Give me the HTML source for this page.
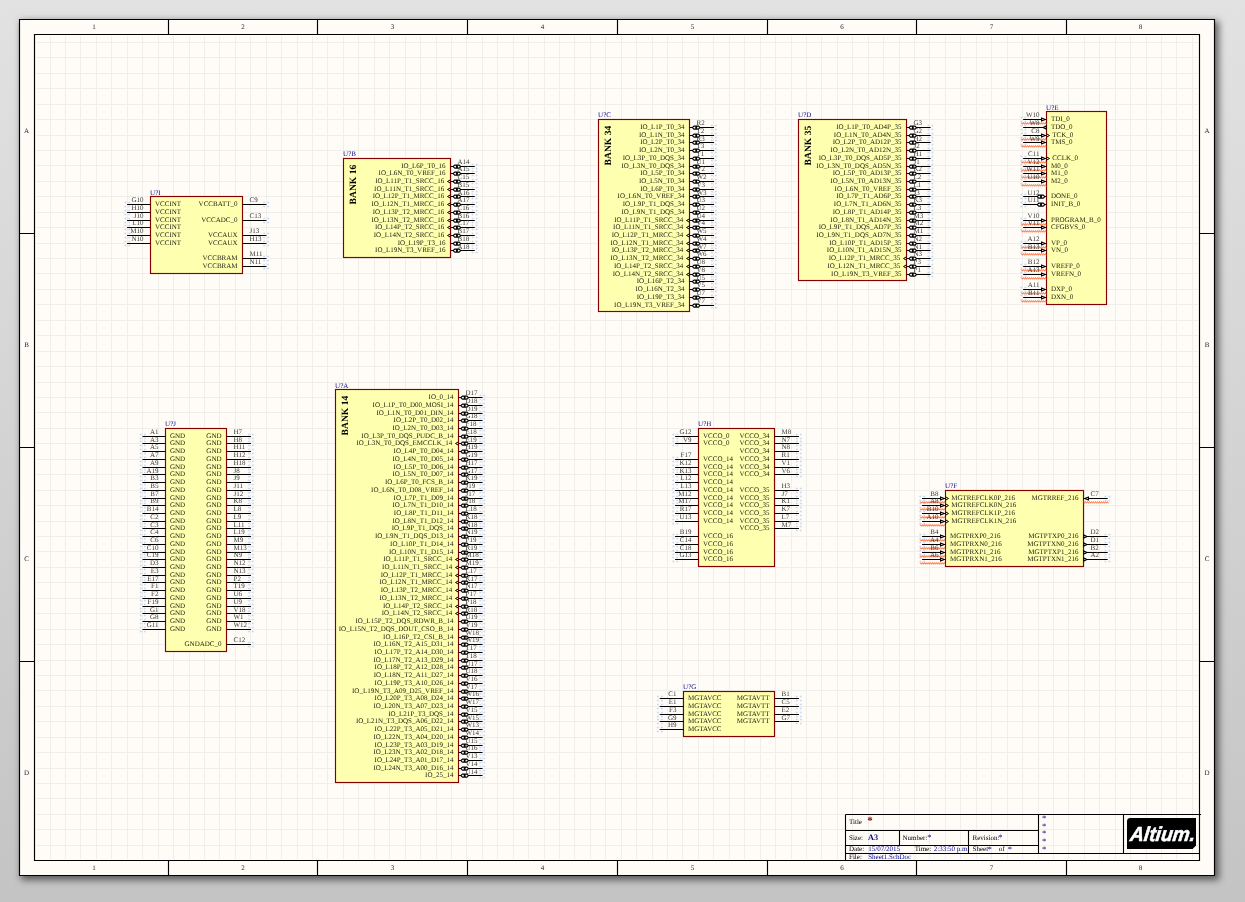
<!DOCTYPE html>
<html lang="en">
<head>
<meta charset="utf-8">
<title>Sheet1.SchDoc</title>
<style>
html,body{margin:0;padding:0;}
body{width:1245px;height:902px;overflow:hidden;position:relative;
background:linear-gradient(to bottom,#e2e2e2 0%,#c4c4c4 100%);}
#shadow{position:absolute;left:18.8px;top:18.8px;width:1196.4px;height:857.1px;background:#fffcf8;
box-shadow:3px 3px 7px 1px rgba(0,0,0,0.55);}
svg{position:absolute;left:0;top:0;display:block;will-change:transform;}
</style>
</head>
<body>
<div id="shadow"></div>
<svg width="1245" height="902" viewBox="0 0 1245 902" font-family="'Liberation Serif', 'Times New Roman', serif" font-size="7" fill="#000" text-rendering="geometricPrecision">
<rect x="19.5" y="19.45" width="1195" height="856.05" fill="#fffcf8"/>
<path d="M50.5 36.25V858.95M65.5 36.25V858.95M80.5 36.25V858.95M96.5 36.25V858.95M111.5 36.25V858.95M127.5 36.25V858.95M142.5 36.25V858.95M158.5 36.25V858.95M173.5 36.25V858.95M189.5 36.25V858.95M204.5 36.25V858.95M219.5 36.25V858.95M235.5 36.25V858.95M250.5 36.25V858.95M266.5 36.25V858.95M281.5 36.25V858.95M297.5 36.25V858.95M312.5 36.25V858.95M327.5 36.25V858.95M343.5 36.25V858.95M358.5 36.25V858.95M374.5 36.25V858.95M389.5 36.25V858.95M405.5 36.25V858.95M420.5 36.25V858.95M436.5 36.25V858.95M451.5 36.25V858.95M466.5 36.25V858.95M482.5 36.25V858.95M497.5 36.25V858.95M513.5 36.25V858.95M528.5 36.25V858.95M544.5 36.25V858.95M559.5 36.25V858.95M574.5 36.25V858.95M590.5 36.25V858.95M605.5 36.25V858.95M621.5 36.25V858.95M636.5 36.25V858.95M652.5 36.25V858.95M667.5 36.25V858.95M682.5 36.25V858.95M698.5 36.25V858.95M713.5 36.25V858.95M729.5 36.25V858.95M744.5 36.25V858.95M760.5 36.25V858.95M775.5 36.25V858.95M791.5 36.25V858.95M806.5 36.25V858.95M821.5 36.25V858.95M837.5 36.25V858.95M852.5 36.25V858.95M868.5 36.25V858.95M883.5 36.25V858.95M899.5 36.25V858.95M914.5 36.25V858.95M929.5 36.25V858.95M945.5 36.25V858.95M960.5 36.25V858.95M976.5 36.25V858.95M991.5 36.25V858.95M1007.5 36.25V858.95M1022.5 36.25V858.95M1038.5 36.25V858.95M1053.5 36.25V858.95M1068.5 36.25V858.95M1084.5 36.25V858.95M1099.5 36.25V858.95M1115.5 36.25V858.95M1130.5 36.25V858.95M1146.5 36.25V858.95M1161.5 36.25V858.95M1176.5 36.25V858.95M1192.5 36.25V858.95M36.3 845.5H1198M36.3 829.5H1198M36.3 814.5H1198M36.3 798.5H1198M36.3 783.5H1198M36.3 768.5H1198M36.3 752.5H1198M36.3 737.5H1198M36.3 721.5H1198M36.3 706.5H1198M36.3 690.5H1198M36.3 675.5H1198M36.3 660.5H1198M36.3 644.5H1198M36.3 629.5H1198M36.3 613.5H1198M36.3 598.5H1198M36.3 582.5H1198M36.3 567.5H1198M36.3 551.5H1198M36.3 536.5H1198M36.3 521.5H1198M36.3 505.5H1198M36.3 490.5H1198M36.3 474.5H1198M36.3 459.5H1198M36.3 443.5H1198M36.3 428.5H1198M36.3 412.5H1198M36.3 397.5H1198M36.3 382.5H1198M36.3 366.5H1198M36.3 351.5H1198M36.3 335.5H1198M36.3 320.5H1198M36.3 304.5H1198M36.3 289.5H1198M36.3 273.5H1198M36.3 258.5H1198M36.3 243.5H1198M36.3 227.5H1198M36.3 212.5H1198M36.3 196.5H1198M36.3 181.5H1198M36.3 165.5H1198M36.3 150.5H1198M36.3 135.5H1198M36.3 119.5H1198M36.3 104.5H1198M36.3 88.5H1198M36.3 73.5H1198M36.3 57.5H1198M36.3 42.5H1198" stroke="#eeeeea" stroke-width="1" fill="none"/>
<path d="M19.5 19.45H1214.5V875.5H19.5ZM34.5 34.45H1199.5V860.45H34.5ZM168.5 19.45V34.45M168.5 860.45V875.5M317.5 19.45V34.45M317.5 860.45V875.5M467.5 19.45V34.45M467.5 860.45V875.5M617.5 19.45V34.45M617.5 860.45V875.5M767.5 19.45V34.45M767.5 860.45V875.5M916.5 19.45V34.45M916.5 860.45V875.5M1066.5 19.45V34.45M1066.5 860.45V875.5M19.5 233.5H34.5M1199.5 233.5H1214.5M19.5 447.5H34.5M1199.5 447.5H1214.5M19.5 661.5H34.5M1199.5 661.5H1214.5" stroke="#000" stroke-width="1.15" fill="none"/>
<g text-anchor="middle" fill="#222">
<text x="94" y="29.2">1</text>
<text x="94" y="870.2">1</text>
<text x="243" y="29.2">2</text>
<text x="243" y="870.2">2</text>
<text x="392.5" y="29.2">3</text>
<text x="392.5" y="870.2">3</text>
<text x="542.5" y="29.2">4</text>
<text x="542.5" y="870.2">4</text>
<text x="692.5" y="29.2">5</text>
<text x="692.5" y="870.2">5</text>
<text x="842" y="29.2">6</text>
<text x="842" y="870.2">6</text>
<text x="991.5" y="29.2">7</text>
<text x="991.5" y="870.2">7</text>
<text x="1140.5" y="29.2">8</text>
<text x="1140.5" y="870.2">8</text>
<text x="26.6" y="132.7">A</text>
<text x="1207" y="132.7">A</text>
<text x="26.6" y="346.7">B</text>
<text x="1207" y="346.7">B</text>
<text x="26.6" y="560.7">C</text>
<text x="1207" y="560.7">C</text>
<text x="26.6" y="775.2">D</text>
<text x="1207" y="775.2">D</text>
</g>
<path d="M845.5 814.5H1201M845.5 814.5V860.45M845.5 830.5H1038.5M845.5 845.5H1038.5M845.5 853.5H1199.5M899.5 830.5V845.5M968.5 830.5V853.5M1038.5 814.5V853.5M1123.5 814.5V853.5" stroke="#000" stroke-width="1.1" fill="none"/>
<g>
<text x="849" y="823.6">Title</text>
<text x="867.2" y="823.9" fill="#8b0000" font-weight="bold" font-size="11">*</text>
<text x="849" y="839.6">Size:</text>
<text x="868" y="839.6" fill="#0a0a8c" font-weight="bold" font-size="8.2">A3</text>
<text x="902.5" y="839.6">Number:</text>
<text x="927.3" y="840.1" fill="#0a0a8c" font-size="8.6">*</text>
<text x="972.6" y="839.6">Revision:</text>
<text x="998.3" y="840.1" fill="#0a0a8c" font-size="8.6">*</text>
<text x="849" y="851.2">Date:</text>
<text x="868.2" y="851.2" fill="#0a0a8c">15/07/2015</text>
<text x="914.7" y="851.2">Time:</text>
<text x="933.7" y="851.2" fill="#0a0a8c">2:33:50 p.m</text>
<text x="972.6" y="851.2">Sheet</text>
<text x="987.6" y="851.9" fill="#0a0a8c" font-size="8.6">*</text>
<text x="998.7" y="851.2">of</text>
<text x="1007.8" y="851.9" fill="#0a0a8c" font-size="8.6">*</text>
<text x="849" y="858.6">File:</text>
<text x="868.2" y="858.6" fill="#0a0a8c">Sheet1.SchDoc</text>
<text x="1042" y="821.1" fill="#0a0a8c" font-size="8.6">*</text>
<text x="1042" y="828.7" fill="#0a0a8c" font-size="8.6">*</text>
<text x="1042" y="836.4" fill="#0a0a8c" font-size="8.6">*</text>
<text x="1042" y="844.2" fill="#0a0a8c" font-size="8.6">*</text>
<text x="1042" y="852" fill="#0a0a8c" font-size="8.6">*</text>
</g>
<path d="M1130.4 818H1196V845.4L1192.6 848.9H1127V821.4Q1127 818 1130.4 818Z" fill="#000"/>
<text transform="translate(1129.5 840.7) skewX(-7)" font-family="'Liberation Sans', Arial, sans-serif" font-weight="bold" font-style="italic" font-size="20.2" fill="#fff" stroke="#fff" stroke-width="0.55" textLength="65" lengthAdjust="spacingAndGlyphs">Altium.</text>
<g fill="#c9d8f1"><rect x="124.39" y="201.7" width="1.8" height="1.6"/><rect x="124.39" y="205.7" width="1.8" height="1.6"/><rect x="128.39" y="201.7" width="1.8" height="1.6"/><rect x="128.39" y="205.7" width="1.8" height="1.6"/><rect x="124.39" y="209.7" width="1.8" height="1.6"/><rect x="124.39" y="213.7" width="1.8" height="1.6"/><rect x="128.39" y="209.7" width="1.8" height="1.6"/><rect x="128.39" y="213.7" width="1.8" height="1.6"/><rect x="124.39" y="217.7" width="1.8" height="1.6"/><rect x="124.39" y="221.7" width="1.8" height="1.6"/><rect x="128.39" y="217.7" width="1.8" height="1.6"/><rect x="128.39" y="221.7" width="1.8" height="1.6"/><rect x="124.39" y="224.7" width="1.8" height="1.6"/><rect x="124.39" y="228.7" width="1.8" height="1.6"/><rect x="128.39" y="224.7" width="1.8" height="1.6"/><rect x="128.39" y="228.7" width="1.8" height="1.6"/><rect x="124.39" y="232.7" width="1.8" height="1.6"/><rect x="124.39" y="236.7" width="1.8" height="1.6"/><rect x="128.39" y="232.7" width="1.8" height="1.6"/><rect x="128.39" y="236.7" width="1.8" height="1.6"/><rect x="124.39" y="240.7" width="1.8" height="1.6"/><rect x="124.39" y="244.7" width="1.8" height="1.6"/><rect x="128.39" y="240.7" width="1.8" height="1.6"/><rect x="128.39" y="244.7" width="1.8" height="1.6"/><rect x="263.32" y="201.7" width="1.8" height="1.6"/><rect x="263.32" y="205.7" width="1.8" height="1.6"/><rect x="267.32" y="201.7" width="1.8" height="1.6"/><rect x="267.32" y="205.7" width="1.8" height="1.6"/><rect x="263.32" y="217.7" width="1.8" height="1.6"/><rect x="263.32" y="221.7" width="1.8" height="1.6"/><rect x="267.32" y="217.7" width="1.8" height="1.6"/><rect x="267.32" y="221.7" width="1.8" height="1.6"/><rect x="263.32" y="232.7" width="1.8" height="1.6"/><rect x="263.32" y="236.7" width="1.8" height="1.6"/><rect x="267.32" y="232.7" width="1.8" height="1.6"/><rect x="267.32" y="236.7" width="1.8" height="1.6"/><rect x="263.32" y="240.7" width="1.8" height="1.6"/><rect x="263.32" y="244.7" width="1.8" height="1.6"/><rect x="267.32" y="240.7" width="1.8" height="1.6"/><rect x="267.32" y="244.7" width="1.8" height="1.6"/><rect x="263.32" y="255.7" width="1.8" height="1.6"/><rect x="263.32" y="259.7" width="1.8" height="1.6"/><rect x="267.32" y="255.7" width="1.8" height="1.6"/><rect x="267.32" y="259.7" width="1.8" height="1.6"/><rect x="263.32" y="263.7" width="1.8" height="1.6"/><rect x="263.32" y="267.7" width="1.8" height="1.6"/><rect x="267.32" y="263.7" width="1.8" height="1.6"/><rect x="267.32" y="267.7" width="1.8" height="1.6"/><rect x="471.7" y="163.7" width="1.8" height="1.6"/><rect x="471.7" y="167.7" width="1.8" height="1.6"/><rect x="475.7" y="163.7" width="1.8" height="1.6"/><rect x="475.7" y="167.7" width="1.8" height="1.6"/><rect x="471.7" y="170.7" width="1.8" height="1.6"/><rect x="471.7" y="174.7" width="1.8" height="1.6"/><rect x="475.7" y="170.7" width="1.8" height="1.6"/><rect x="475.7" y="174.7" width="1.8" height="1.6"/><rect x="471.7" y="178.7" width="1.8" height="1.6"/><rect x="471.7" y="182.7" width="1.8" height="1.6"/><rect x="475.7" y="178.7" width="1.8" height="1.6"/><rect x="475.7" y="182.7" width="1.8" height="1.6"/><rect x="471.7" y="186.7" width="1.8" height="1.6"/><rect x="471.7" y="190.7" width="1.8" height="1.6"/><rect x="475.7" y="186.7" width="1.8" height="1.6"/><rect x="475.7" y="190.7" width="1.8" height="1.6"/><rect x="471.7" y="193.7" width="1.8" height="1.6"/><rect x="471.7" y="197.7" width="1.8" height="1.6"/><rect x="475.7" y="193.7" width="1.8" height="1.6"/><rect x="475.7" y="197.7" width="1.8" height="1.6"/><rect x="471.7" y="201.7" width="1.8" height="1.6"/><rect x="471.7" y="205.7" width="1.8" height="1.6"/><rect x="475.7" y="201.7" width="1.8" height="1.6"/><rect x="475.7" y="205.7" width="1.8" height="1.6"/><rect x="471.7" y="209.7" width="1.8" height="1.6"/><rect x="471.7" y="213.7" width="1.8" height="1.6"/><rect x="475.7" y="209.7" width="1.8" height="1.6"/><rect x="475.7" y="213.7" width="1.8" height="1.6"/><rect x="471.7" y="217.7" width="1.8" height="1.6"/><rect x="471.7" y="221.7" width="1.8" height="1.6"/><rect x="475.7" y="217.7" width="1.8" height="1.6"/><rect x="475.7" y="221.7" width="1.8" height="1.6"/><rect x="471.7" y="224.7" width="1.8" height="1.6"/><rect x="471.7" y="228.7" width="1.8" height="1.6"/><rect x="475.7" y="224.7" width="1.8" height="1.6"/><rect x="475.7" y="228.7" width="1.8" height="1.6"/><rect x="471.7" y="232.7" width="1.8" height="1.6"/><rect x="471.7" y="236.7" width="1.8" height="1.6"/><rect x="475.7" y="232.7" width="1.8" height="1.6"/><rect x="475.7" y="236.7" width="1.8" height="1.6"/><rect x="471.7" y="240.7" width="1.8" height="1.6"/><rect x="471.7" y="244.7" width="1.8" height="1.6"/><rect x="475.7" y="240.7" width="1.8" height="1.6"/><rect x="475.7" y="244.7" width="1.8" height="1.6"/><rect x="471.7" y="247.7" width="1.8" height="1.6"/><rect x="471.7" y="251.7" width="1.8" height="1.6"/><rect x="475.7" y="247.7" width="1.8" height="1.6"/><rect x="475.7" y="251.7" width="1.8" height="1.6"/><rect x="710.96" y="124.7" width="1.8" height="1.6"/><rect x="710.96" y="128.7" width="1.8" height="1.6"/><rect x="714.96" y="124.7" width="1.8" height="1.6"/><rect x="714.96" y="128.7" width="1.8" height="1.6"/><rect x="710.96" y="132.7" width="1.8" height="1.6"/><rect x="710.96" y="136.7" width="1.8" height="1.6"/><rect x="714.96" y="132.7" width="1.8" height="1.6"/><rect x="714.96" y="136.7" width="1.8" height="1.6"/><rect x="710.96" y="139.7" width="1.8" height="1.6"/><rect x="710.96" y="143.7" width="1.8" height="1.6"/><rect x="714.96" y="139.7" width="1.8" height="1.6"/><rect x="714.96" y="143.7" width="1.8" height="1.6"/><rect x="710.96" y="147.7" width="1.8" height="1.6"/><rect x="710.96" y="151.7" width="1.8" height="1.6"/><rect x="714.96" y="147.7" width="1.8" height="1.6"/><rect x="714.96" y="151.7" width="1.8" height="1.6"/><rect x="710.96" y="155.7" width="1.8" height="1.6"/><rect x="710.96" y="159.7" width="1.8" height="1.6"/><rect x="714.96" y="155.7" width="1.8" height="1.6"/><rect x="714.96" y="159.7" width="1.8" height="1.6"/><rect x="710.96" y="163.7" width="1.8" height="1.6"/><rect x="710.96" y="167.7" width="1.8" height="1.6"/><rect x="714.96" y="163.7" width="1.8" height="1.6"/><rect x="714.96" y="167.7" width="1.8" height="1.6"/><rect x="710.96" y="170.7" width="1.8" height="1.6"/><rect x="710.96" y="174.7" width="1.8" height="1.6"/><rect x="714.96" y="170.7" width="1.8" height="1.6"/><rect x="714.96" y="174.7" width="1.8" height="1.6"/><rect x="710.96" y="178.7" width="1.8" height="1.6"/><rect x="710.96" y="182.7" width="1.8" height="1.6"/><rect x="714.96" y="178.7" width="1.8" height="1.6"/><rect x="714.96" y="182.7" width="1.8" height="1.6"/><rect x="710.96" y="186.7" width="1.8" height="1.6"/><rect x="710.96" y="190.7" width="1.8" height="1.6"/><rect x="714.96" y="186.7" width="1.8" height="1.6"/><rect x="714.96" y="190.7" width="1.8" height="1.6"/><rect x="710.96" y="193.7" width="1.8" height="1.6"/><rect x="710.96" y="197.7" width="1.8" height="1.6"/><rect x="714.96" y="193.7" width="1.8" height="1.6"/><rect x="714.96" y="197.7" width="1.8" height="1.6"/><rect x="710.96" y="201.7" width="1.8" height="1.6"/><rect x="710.96" y="205.7" width="1.8" height="1.6"/><rect x="714.96" y="201.7" width="1.8" height="1.6"/><rect x="714.96" y="205.7" width="1.8" height="1.6"/><rect x="710.96" y="209.7" width="1.8" height="1.6"/><rect x="710.96" y="213.7" width="1.8" height="1.6"/><rect x="714.96" y="209.7" width="1.8" height="1.6"/><rect x="714.96" y="213.7" width="1.8" height="1.6"/><rect x="710.96" y="217.7" width="1.8" height="1.6"/><rect x="710.96" y="221.7" width="1.8" height="1.6"/><rect x="714.96" y="217.7" width="1.8" height="1.6"/><rect x="714.96" y="221.7" width="1.8" height="1.6"/><rect x="710.96" y="224.7" width="1.8" height="1.6"/><rect x="710.96" y="228.7" width="1.8" height="1.6"/><rect x="714.96" y="224.7" width="1.8" height="1.6"/><rect x="714.96" y="228.7" width="1.8" height="1.6"/><rect x="710.96" y="232.7" width="1.8" height="1.6"/><rect x="710.96" y="236.7" width="1.8" height="1.6"/><rect x="714.96" y="232.7" width="1.8" height="1.6"/><rect x="714.96" y="236.7" width="1.8" height="1.6"/><rect x="710.96" y="240.7" width="1.8" height="1.6"/><rect x="710.96" y="244.7" width="1.8" height="1.6"/><rect x="714.96" y="240.7" width="1.8" height="1.6"/><rect x="714.96" y="244.7" width="1.8" height="1.6"/><rect x="710.96" y="247.7" width="1.8" height="1.6"/><rect x="710.96" y="251.7" width="1.8" height="1.6"/><rect x="714.96" y="247.7" width="1.8" height="1.6"/><rect x="714.96" y="251.7" width="1.8" height="1.6"/><rect x="710.96" y="255.7" width="1.8" height="1.6"/><rect x="710.96" y="259.7" width="1.8" height="1.6"/><rect x="714.96" y="255.7" width="1.8" height="1.6"/><rect x="714.96" y="259.7" width="1.8" height="1.6"/><rect x="710.96" y="263.7" width="1.8" height="1.6"/><rect x="710.96" y="267.7" width="1.8" height="1.6"/><rect x="714.96" y="263.7" width="1.8" height="1.6"/><rect x="714.96" y="267.7" width="1.8" height="1.6"/><rect x="710.96" y="271.7" width="1.8" height="1.6"/><rect x="710.96" y="275.7" width="1.8" height="1.6"/><rect x="714.96" y="271.7" width="1.8" height="1.6"/><rect x="714.96" y="275.7" width="1.8" height="1.6"/><rect x="710.96" y="278.7" width="1.8" height="1.6"/><rect x="710.96" y="282.7" width="1.8" height="1.6"/><rect x="714.96" y="278.7" width="1.8" height="1.6"/><rect x="714.96" y="282.7" width="1.8" height="1.6"/><rect x="710.96" y="286.7" width="1.8" height="1.6"/><rect x="710.96" y="290.7" width="1.8" height="1.6"/><rect x="714.96" y="286.7" width="1.8" height="1.6"/><rect x="714.96" y="290.7" width="1.8" height="1.6"/><rect x="710.96" y="294.7" width="1.8" height="1.6"/><rect x="710.96" y="298.7" width="1.8" height="1.6"/><rect x="714.96" y="294.7" width="1.8" height="1.6"/><rect x="714.96" y="298.7" width="1.8" height="1.6"/><rect x="710.96" y="302.7" width="1.8" height="1.6"/><rect x="710.96" y="306.7" width="1.8" height="1.6"/><rect x="714.96" y="302.7" width="1.8" height="1.6"/><rect x="714.96" y="306.7" width="1.8" height="1.6"/><rect x="927.53" y="124.7" width="1.8" height="1.6"/><rect x="927.53" y="128.7" width="1.8" height="1.6"/><rect x="931.53" y="124.7" width="1.8" height="1.6"/><rect x="931.53" y="128.7" width="1.8" height="1.6"/><rect x="927.53" y="132.7" width="1.8" height="1.6"/><rect x="927.53" y="136.7" width="1.8" height="1.6"/><rect x="931.53" y="132.7" width="1.8" height="1.6"/><rect x="931.53" y="136.7" width="1.8" height="1.6"/><rect x="927.53" y="139.7" width="1.8" height="1.6"/><rect x="927.53" y="143.7" width="1.8" height="1.6"/><rect x="931.53" y="139.7" width="1.8" height="1.6"/><rect x="931.53" y="143.7" width="1.8" height="1.6"/><rect x="927.53" y="147.7" width="1.8" height="1.6"/><rect x="927.53" y="151.7" width="1.8" height="1.6"/><rect x="931.53" y="147.7" width="1.8" height="1.6"/><rect x="931.53" y="151.7" width="1.8" height="1.6"/><rect x="927.53" y="155.7" width="1.8" height="1.6"/><rect x="927.53" y="159.7" width="1.8" height="1.6"/><rect x="931.53" y="155.7" width="1.8" height="1.6"/><rect x="931.53" y="159.7" width="1.8" height="1.6"/><rect x="927.53" y="163.7" width="1.8" height="1.6"/><rect x="927.53" y="167.7" width="1.8" height="1.6"/><rect x="931.53" y="163.7" width="1.8" height="1.6"/><rect x="931.53" y="167.7" width="1.8" height="1.6"/><rect x="927.53" y="170.7" width="1.8" height="1.6"/><rect x="927.53" y="174.7" width="1.8" height="1.6"/><rect x="931.53" y="170.7" width="1.8" height="1.6"/><rect x="931.53" y="174.7" width="1.8" height="1.6"/><rect x="927.53" y="178.7" width="1.8" height="1.6"/><rect x="927.53" y="182.7" width="1.8" height="1.6"/><rect x="931.53" y="178.7" width="1.8" height="1.6"/><rect x="931.53" y="182.7" width="1.8" height="1.6"/><rect x="927.53" y="186.7" width="1.8" height="1.6"/><rect x="927.53" y="190.7" width="1.8" height="1.6"/><rect x="931.53" y="186.7" width="1.8" height="1.6"/><rect x="931.53" y="190.7" width="1.8" height="1.6"/><rect x="927.53" y="193.7" width="1.8" height="1.6"/><rect x="927.53" y="197.7" width="1.8" height="1.6"/><rect x="931.53" y="193.7" width="1.8" height="1.6"/><rect x="931.53" y="197.7" width="1.8" height="1.6"/><rect x="927.53" y="201.7" width="1.8" height="1.6"/><rect x="927.53" y="205.7" width="1.8" height="1.6"/><rect x="931.53" y="201.7" width="1.8" height="1.6"/><rect x="931.53" y="205.7" width="1.8" height="1.6"/><rect x="927.53" y="209.7" width="1.8" height="1.6"/><rect x="927.53" y="213.7" width="1.8" height="1.6"/><rect x="931.53" y="209.7" width="1.8" height="1.6"/><rect x="931.53" y="213.7" width="1.8" height="1.6"/><rect x="927.53" y="217.7" width="1.8" height="1.6"/><rect x="927.53" y="221.7" width="1.8" height="1.6"/><rect x="931.53" y="217.7" width="1.8" height="1.6"/><rect x="931.53" y="221.7" width="1.8" height="1.6"/><rect x="927.53" y="224.7" width="1.8" height="1.6"/><rect x="927.53" y="228.7" width="1.8" height="1.6"/><rect x="931.53" y="224.7" width="1.8" height="1.6"/><rect x="931.53" y="228.7" width="1.8" height="1.6"/><rect x="927.53" y="232.7" width="1.8" height="1.6"/><rect x="927.53" y="236.7" width="1.8" height="1.6"/><rect x="931.53" y="232.7" width="1.8" height="1.6"/><rect x="931.53" y="236.7" width="1.8" height="1.6"/><rect x="927.53" y="240.7" width="1.8" height="1.6"/><rect x="927.53" y="244.7" width="1.8" height="1.6"/><rect x="931.53" y="240.7" width="1.8" height="1.6"/><rect x="931.53" y="244.7" width="1.8" height="1.6"/><rect x="927.53" y="247.7" width="1.8" height="1.6"/><rect x="927.53" y="251.7" width="1.8" height="1.6"/><rect x="931.53" y="247.7" width="1.8" height="1.6"/><rect x="931.53" y="251.7" width="1.8" height="1.6"/><rect x="927.53" y="255.7" width="1.8" height="1.6"/><rect x="927.53" y="259.7" width="1.8" height="1.6"/><rect x="931.53" y="255.7" width="1.8" height="1.6"/><rect x="931.53" y="259.7" width="1.8" height="1.6"/><rect x="927.53" y="263.7" width="1.8" height="1.6"/><rect x="927.53" y="267.7" width="1.8" height="1.6"/><rect x="931.53" y="263.7" width="1.8" height="1.6"/><rect x="931.53" y="267.7" width="1.8" height="1.6"/><rect x="927.53" y="271.7" width="1.8" height="1.6"/><rect x="927.53" y="275.7" width="1.8" height="1.6"/><rect x="931.53" y="271.7" width="1.8" height="1.6"/><rect x="931.53" y="275.7" width="1.8" height="1.6"/><rect x="1020.45" y="116.7" width="1.8" height="1.6"/><rect x="1020.45" y="120.7" width="1.8" height="1.6"/><rect x="1024.45" y="116.7" width="1.8" height="1.6"/><rect x="1024.45" y="120.7" width="1.8" height="1.6"/><rect x="1020.45" y="124.7" width="1.8" height="1.6"/><rect x="1020.45" y="128.7" width="1.8" height="1.6"/><rect x="1024.45" y="124.7" width="1.8" height="1.6"/><rect x="1024.45" y="128.7" width="1.8" height="1.6"/><rect x="1020.45" y="132.7" width="1.8" height="1.6"/><rect x="1020.45" y="136.7" width="1.8" height="1.6"/><rect x="1024.45" y="132.7" width="1.8" height="1.6"/><rect x="1024.45" y="136.7" width="1.8" height="1.6"/><rect x="1020.45" y="139.7" width="1.8" height="1.6"/><rect x="1020.45" y="143.7" width="1.8" height="1.6"/><rect x="1024.45" y="139.7" width="1.8" height="1.6"/><rect x="1024.45" y="143.7" width="1.8" height="1.6"/><rect x="1020.45" y="155.7" width="1.8" height="1.6"/><rect x="1020.45" y="159.7" width="1.8" height="1.6"/><rect x="1024.45" y="155.7" width="1.8" height="1.6"/><rect x="1024.45" y="159.7" width="1.8" height="1.6"/><rect x="1020.45" y="163.7" width="1.8" height="1.6"/><rect x="1020.45" y="167.7" width="1.8" height="1.6"/><rect x="1024.45" y="163.7" width="1.8" height="1.6"/><rect x="1024.45" y="167.7" width="1.8" height="1.6"/><rect x="1020.45" y="170.7" width="1.8" height="1.6"/><rect x="1020.45" y="174.7" width="1.8" height="1.6"/><rect x="1024.45" y="170.7" width="1.8" height="1.6"/><rect x="1024.45" y="174.7" width="1.8" height="1.6"/><rect x="1020.45" y="178.7" width="1.8" height="1.6"/><rect x="1020.45" y="182.7" width="1.8" height="1.6"/><rect x="1024.45" y="178.7" width="1.8" height="1.6"/><rect x="1024.45" y="182.7" width="1.8" height="1.6"/><rect x="1020.45" y="193.7" width="1.8" height="1.6"/><rect x="1020.45" y="197.7" width="1.8" height="1.6"/><rect x="1024.45" y="193.7" width="1.8" height="1.6"/><rect x="1024.45" y="197.7" width="1.8" height="1.6"/><rect x="1020.45" y="201.7" width="1.8" height="1.6"/><rect x="1020.45" y="205.7" width="1.8" height="1.6"/><rect x="1024.45" y="201.7" width="1.8" height="1.6"/><rect x="1024.45" y="205.7" width="1.8" height="1.6"/><rect x="1020.45" y="217.7" width="1.8" height="1.6"/><rect x="1020.45" y="221.7" width="1.8" height="1.6"/><rect x="1024.45" y="217.7" width="1.8" height="1.6"/><rect x="1024.45" y="221.7" width="1.8" height="1.6"/><rect x="1020.45" y="224.7" width="1.8" height="1.6"/><rect x="1020.45" y="228.7" width="1.8" height="1.6"/><rect x="1024.45" y="224.7" width="1.8" height="1.6"/><rect x="1024.45" y="228.7" width="1.8" height="1.6"/><rect x="1020.45" y="240.7" width="1.8" height="1.6"/><rect x="1020.45" y="244.7" width="1.8" height="1.6"/><rect x="1024.45" y="240.7" width="1.8" height="1.6"/><rect x="1024.45" y="244.7" width="1.8" height="1.6"/><rect x="1020.45" y="247.7" width="1.8" height="1.6"/><rect x="1020.45" y="251.7" width="1.8" height="1.6"/><rect x="1024.45" y="247.7" width="1.8" height="1.6"/><rect x="1024.45" y="251.7" width="1.8" height="1.6"/><rect x="1020.45" y="263.7" width="1.8" height="1.6"/><rect x="1020.45" y="267.7" width="1.8" height="1.6"/><rect x="1024.45" y="263.7" width="1.8" height="1.6"/><rect x="1024.45" y="267.7" width="1.8" height="1.6"/><rect x="1020.45" y="271.7" width="1.8" height="1.6"/><rect x="1020.45" y="275.7" width="1.8" height="1.6"/><rect x="1024.45" y="271.7" width="1.8" height="1.6"/><rect x="1024.45" y="275.7" width="1.8" height="1.6"/><rect x="1020.45" y="286.7" width="1.8" height="1.6"/><rect x="1020.45" y="290.7" width="1.8" height="1.6"/><rect x="1024.45" y="286.7" width="1.8" height="1.6"/><rect x="1024.45" y="290.7" width="1.8" height="1.6"/><rect x="1020.45" y="294.7" width="1.8" height="1.6"/><rect x="1020.45" y="298.7" width="1.8" height="1.6"/><rect x="1024.45" y="294.7" width="1.8" height="1.6"/><rect x="1024.45" y="298.7" width="1.8" height="1.6"/><rect x="139.83" y="433.7" width="1.8" height="1.6"/><rect x="139.83" y="437.7" width="1.8" height="1.6"/><rect x="143.83" y="433.7" width="1.8" height="1.6"/><rect x="143.83" y="437.7" width="1.8" height="1.6"/><rect x="139.83" y="440.7" width="1.8" height="1.6"/><rect x="139.83" y="444.7" width="1.8" height="1.6"/><rect x="143.83" y="440.7" width="1.8" height="1.6"/><rect x="143.83" y="444.7" width="1.8" height="1.6"/><rect x="139.83" y="448.7" width="1.8" height="1.6"/><rect x="139.83" y="452.7" width="1.8" height="1.6"/><rect x="143.83" y="448.7" width="1.8" height="1.6"/><rect x="143.83" y="452.7" width="1.8" height="1.6"/><rect x="139.83" y="456.7" width="1.8" height="1.6"/><rect x="139.83" y="460.7" width="1.8" height="1.6"/><rect x="143.83" y="456.7" width="1.8" height="1.6"/><rect x="143.83" y="460.7" width="1.8" height="1.6"/><rect x="139.83" y="464.7" width="1.8" height="1.6"/><rect x="139.83" y="468.7" width="1.8" height="1.6"/><rect x="143.83" y="464.7" width="1.8" height="1.6"/><rect x="143.83" y="468.7" width="1.8" height="1.6"/><rect x="139.83" y="471.7" width="1.8" height="1.6"/><rect x="139.83" y="475.7" width="1.8" height="1.6"/><rect x="143.83" y="471.7" width="1.8" height="1.6"/><rect x="143.83" y="475.7" width="1.8" height="1.6"/><rect x="139.83" y="479.7" width="1.8" height="1.6"/><rect x="139.83" y="483.7" width="1.8" height="1.6"/><rect x="143.83" y="479.7" width="1.8" height="1.6"/><rect x="143.83" y="483.7" width="1.8" height="1.6"/><rect x="139.83" y="487.7" width="1.8" height="1.6"/><rect x="139.83" y="491.7" width="1.8" height="1.6"/><rect x="143.83" y="487.7" width="1.8" height="1.6"/><rect x="143.83" y="491.7" width="1.8" height="1.6"/><rect x="139.83" y="495.7" width="1.8" height="1.6"/><rect x="139.83" y="499.7" width="1.8" height="1.6"/><rect x="143.83" y="495.7" width="1.8" height="1.6"/><rect x="143.83" y="499.7" width="1.8" height="1.6"/><rect x="139.83" y="502.7" width="1.8" height="1.6"/><rect x="139.83" y="506.7" width="1.8" height="1.6"/><rect x="143.83" y="502.7" width="1.8" height="1.6"/><rect x="143.83" y="506.7" width="1.8" height="1.6"/><rect x="139.83" y="510.7" width="1.8" height="1.6"/><rect x="139.83" y="514.7" width="1.8" height="1.6"/><rect x="143.83" y="510.7" width="1.8" height="1.6"/><rect x="143.83" y="514.7" width="1.8" height="1.6"/><rect x="139.83" y="518.7" width="1.8" height="1.6"/><rect x="139.83" y="522.7" width="1.8" height="1.6"/><rect x="143.83" y="518.7" width="1.8" height="1.6"/><rect x="143.83" y="522.7" width="1.8" height="1.6"/><rect x="139.83" y="525.7" width="1.8" height="1.6"/><rect x="139.83" y="529.7" width="1.8" height="1.6"/><rect x="143.83" y="525.7" width="1.8" height="1.6"/><rect x="143.83" y="529.7" width="1.8" height="1.6"/><rect x="139.83" y="533.7" width="1.8" height="1.6"/><rect x="139.83" y="537.7" width="1.8" height="1.6"/><rect x="143.83" y="533.7" width="1.8" height="1.6"/><rect x="143.83" y="537.7" width="1.8" height="1.6"/><rect x="139.83" y="541.7" width="1.8" height="1.6"/><rect x="139.83" y="545.7" width="1.8" height="1.6"/><rect x="143.83" y="541.7" width="1.8" height="1.6"/><rect x="143.83" y="545.7" width="1.8" height="1.6"/><rect x="139.83" y="549.7" width="1.8" height="1.6"/><rect x="139.83" y="553.7" width="1.8" height="1.6"/><rect x="143.83" y="549.7" width="1.8" height="1.6"/><rect x="143.83" y="553.7" width="1.8" height="1.6"/><rect x="139.83" y="556.7" width="1.8" height="1.6"/><rect x="139.83" y="560.7" width="1.8" height="1.6"/><rect x="143.83" y="556.7" width="1.8" height="1.6"/><rect x="143.83" y="560.7" width="1.8" height="1.6"/><rect x="139.83" y="564.7" width="1.8" height="1.6"/><rect x="139.83" y="568.7" width="1.8" height="1.6"/><rect x="143.83" y="564.7" width="1.8" height="1.6"/><rect x="143.83" y="568.7" width="1.8" height="1.6"/><rect x="139.83" y="572.7" width="1.8" height="1.6"/><rect x="139.83" y="576.7" width="1.8" height="1.6"/><rect x="143.83" y="572.7" width="1.8" height="1.6"/><rect x="143.83" y="576.7" width="1.8" height="1.6"/><rect x="139.83" y="579.7" width="1.8" height="1.6"/><rect x="139.83" y="583.7" width="1.8" height="1.6"/><rect x="143.83" y="579.7" width="1.8" height="1.6"/><rect x="143.83" y="583.7" width="1.8" height="1.6"/><rect x="139.83" y="587.7" width="1.8" height="1.6"/><rect x="139.83" y="591.7" width="1.8" height="1.6"/><rect x="143.83" y="587.7" width="1.8" height="1.6"/><rect x="143.83" y="591.7" width="1.8" height="1.6"/><rect x="139.83" y="595.7" width="1.8" height="1.6"/><rect x="139.83" y="599.7" width="1.8" height="1.6"/><rect x="143.83" y="595.7" width="1.8" height="1.6"/><rect x="143.83" y="599.7" width="1.8" height="1.6"/><rect x="139.83" y="603.7" width="1.8" height="1.6"/><rect x="139.83" y="607.7" width="1.8" height="1.6"/><rect x="143.83" y="603.7" width="1.8" height="1.6"/><rect x="143.83" y="607.7" width="1.8" height="1.6"/><rect x="139.83" y="610.7" width="1.8" height="1.6"/><rect x="139.83" y="614.7" width="1.8" height="1.6"/><rect x="143.83" y="610.7" width="1.8" height="1.6"/><rect x="143.83" y="614.7" width="1.8" height="1.6"/><rect x="139.83" y="618.7" width="1.8" height="1.6"/><rect x="139.83" y="622.7" width="1.8" height="1.6"/><rect x="143.83" y="618.7" width="1.8" height="1.6"/><rect x="143.83" y="622.7" width="1.8" height="1.6"/><rect x="139.83" y="626.7" width="1.8" height="1.6"/><rect x="139.83" y="630.7" width="1.8" height="1.6"/><rect x="143.83" y="626.7" width="1.8" height="1.6"/><rect x="143.83" y="630.7" width="1.8" height="1.6"/><rect x="247.88" y="433.7" width="1.8" height="1.6"/><rect x="247.88" y="437.7" width="1.8" height="1.6"/><rect x="251.88" y="433.7" width="1.8" height="1.6"/><rect x="251.88" y="437.7" width="1.8" height="1.6"/><rect x="247.88" y="440.7" width="1.8" height="1.6"/><rect x="247.88" y="444.7" width="1.8" height="1.6"/><rect x="251.88" y="440.7" width="1.8" height="1.6"/><rect x="251.88" y="444.7" width="1.8" height="1.6"/><rect x="247.88" y="448.7" width="1.8" height="1.6"/><rect x="247.88" y="452.7" width="1.8" height="1.6"/><rect x="251.88" y="448.7" width="1.8" height="1.6"/><rect x="251.88" y="452.7" width="1.8" height="1.6"/><rect x="247.88" y="456.7" width="1.8" height="1.6"/><rect x="247.88" y="460.7" width="1.8" height="1.6"/><rect x="251.88" y="456.7" width="1.8" height="1.6"/><rect x="251.88" y="460.7" width="1.8" height="1.6"/><rect x="247.88" y="464.7" width="1.8" height="1.6"/><rect x="247.88" y="468.7" width="1.8" height="1.6"/><rect x="251.88" y="464.7" width="1.8" height="1.6"/><rect x="251.88" y="468.7" width="1.8" height="1.6"/><rect x="247.88" y="471.7" width="1.8" height="1.6"/><rect x="247.88" y="475.7" width="1.8" height="1.6"/><rect x="251.88" y="471.7" width="1.8" height="1.6"/><rect x="251.88" y="475.7" width="1.8" height="1.6"/><rect x="247.88" y="479.7" width="1.8" height="1.6"/><rect x="247.88" y="483.7" width="1.8" height="1.6"/><rect x="251.88" y="479.7" width="1.8" height="1.6"/><rect x="251.88" y="483.7" width="1.8" height="1.6"/><rect x="247.88" y="487.7" width="1.8" height="1.6"/><rect x="247.88" y="491.7" width="1.8" height="1.6"/><rect x="251.88" y="487.7" width="1.8" height="1.6"/><rect x="251.88" y="491.7" width="1.8" height="1.6"/><rect x="247.88" y="495.7" width="1.8" height="1.6"/><rect x="247.88" y="499.7" width="1.8" height="1.6"/><rect x="251.88" y="495.7" width="1.8" height="1.6"/><rect x="251.88" y="499.7" width="1.8" height="1.6"/><rect x="247.88" y="502.7" width="1.8" height="1.6"/><rect x="247.88" y="506.7" width="1.8" height="1.6"/><rect x="251.88" y="502.7" width="1.8" height="1.6"/><rect x="251.88" y="506.7" width="1.8" height="1.6"/><rect x="247.88" y="510.7" width="1.8" height="1.6"/><rect x="247.88" y="514.7" width="1.8" height="1.6"/><rect x="251.88" y="510.7" width="1.8" height="1.6"/><rect x="251.88" y="514.7" width="1.8" height="1.6"/><rect x="247.88" y="518.7" width="1.8" height="1.6"/><rect x="247.88" y="522.7" width="1.8" height="1.6"/><rect x="251.88" y="518.7" width="1.8" height="1.6"/><rect x="251.88" y="522.7" width="1.8" height="1.6"/><rect x="247.88" y="525.7" width="1.8" height="1.6"/><rect x="247.88" y="529.7" width="1.8" height="1.6"/><rect x="251.88" y="525.7" width="1.8" height="1.6"/><rect x="251.88" y="529.7" width="1.8" height="1.6"/><rect x="247.88" y="533.7" width="1.8" height="1.6"/><rect x="247.88" y="537.7" width="1.8" height="1.6"/><rect x="251.88" y="533.7" width="1.8" height="1.6"/><rect x="251.88" y="537.7" width="1.8" height="1.6"/><rect x="247.88" y="541.7" width="1.8" height="1.6"/><rect x="247.88" y="545.7" width="1.8" height="1.6"/><rect x="251.88" y="541.7" width="1.8" height="1.6"/><rect x="251.88" y="545.7" width="1.8" height="1.6"/><rect x="247.88" y="549.7" width="1.8" height="1.6"/><rect x="247.88" y="553.7" width="1.8" height="1.6"/><rect x="251.88" y="549.7" width="1.8" height="1.6"/><rect x="251.88" y="553.7" width="1.8" height="1.6"/><rect x="247.88" y="556.7" width="1.8" height="1.6"/><rect x="247.88" y="560.7" width="1.8" height="1.6"/><rect x="251.88" y="556.7" width="1.8" height="1.6"/><rect x="251.88" y="560.7" width="1.8" height="1.6"/><rect x="247.88" y="564.7" width="1.8" height="1.6"/><rect x="247.88" y="568.7" width="1.8" height="1.6"/><rect x="251.88" y="564.7" width="1.8" height="1.6"/><rect x="251.88" y="568.7" width="1.8" height="1.6"/><rect x="247.88" y="572.7" width="1.8" height="1.6"/><rect x="247.88" y="576.7" width="1.8" height="1.6"/><rect x="251.88" y="572.7" width="1.8" height="1.6"/><rect x="251.88" y="576.7" width="1.8" height="1.6"/><rect x="247.88" y="579.7" width="1.8" height="1.6"/><rect x="247.88" y="583.7" width="1.8" height="1.6"/><rect x="251.88" y="579.7" width="1.8" height="1.6"/><rect x="251.88" y="583.7" width="1.8" height="1.6"/><rect x="247.88" y="587.7" width="1.8" height="1.6"/><rect x="247.88" y="591.7" width="1.8" height="1.6"/><rect x="251.88" y="587.7" width="1.8" height="1.6"/><rect x="251.88" y="591.7" width="1.8" height="1.6"/><rect x="247.88" y="595.7" width="1.8" height="1.6"/><rect x="247.88" y="599.7" width="1.8" height="1.6"/><rect x="251.88" y="595.7" width="1.8" height="1.6"/><rect x="251.88" y="599.7" width="1.8" height="1.6"/><rect x="247.88" y="603.7" width="1.8" height="1.6"/><rect x="247.88" y="607.7" width="1.8" height="1.6"/><rect x="251.88" y="603.7" width="1.8" height="1.6"/><rect x="251.88" y="607.7" width="1.8" height="1.6"/><rect x="247.88" y="610.7" width="1.8" height="1.6"/><rect x="247.88" y="614.7" width="1.8" height="1.6"/><rect x="251.88" y="610.7" width="1.8" height="1.6"/><rect x="251.88" y="614.7" width="1.8" height="1.6"/><rect x="247.88" y="618.7" width="1.8" height="1.6"/><rect x="247.88" y="622.7" width="1.8" height="1.6"/><rect x="251.88" y="618.7" width="1.8" height="1.6"/><rect x="251.88" y="622.7" width="1.8" height="1.6"/><rect x="247.88" y="626.7" width="1.8" height="1.6"/><rect x="247.88" y="630.7" width="1.8" height="1.6"/><rect x="251.88" y="626.7" width="1.8" height="1.6"/><rect x="251.88" y="630.7" width="1.8" height="1.6"/><rect x="247.88" y="641.7" width="1.8" height="1.6"/><rect x="247.88" y="645.7" width="1.8" height="1.6"/><rect x="251.88" y="641.7" width="1.8" height="1.6"/><rect x="251.88" y="645.7" width="1.8" height="1.6"/><rect x="479.42" y="394.7" width="1.8" height="1.6"/><rect x="479.42" y="398.7" width="1.8" height="1.6"/><rect x="483.42" y="394.7" width="1.8" height="1.6"/><rect x="483.42" y="398.7" width="1.8" height="1.6"/><rect x="479.42" y="402.7" width="1.8" height="1.6"/><rect x="479.42" y="406.7" width="1.8" height="1.6"/><rect x="483.42" y="402.7" width="1.8" height="1.6"/><rect x="483.42" y="406.7" width="1.8" height="1.6"/><rect x="479.42" y="410.7" width="1.8" height="1.6"/><rect x="479.42" y="414.7" width="1.8" height="1.6"/><rect x="483.42" y="410.7" width="1.8" height="1.6"/><rect x="483.42" y="414.7" width="1.8" height="1.6"/><rect x="479.42" y="417.7" width="1.8" height="1.6"/><rect x="479.42" y="421.7" width="1.8" height="1.6"/><rect x="483.42" y="417.7" width="1.8" height="1.6"/><rect x="483.42" y="421.7" width="1.8" height="1.6"/><rect x="479.42" y="425.7" width="1.8" height="1.6"/><rect x="479.42" y="429.7" width="1.8" height="1.6"/><rect x="483.42" y="425.7" width="1.8" height="1.6"/><rect x="483.42" y="429.7" width="1.8" height="1.6"/><rect x="479.42" y="433.7" width="1.8" height="1.6"/><rect x="479.42" y="437.7" width="1.8" height="1.6"/><rect x="483.42" y="433.7" width="1.8" height="1.6"/><rect x="483.42" y="437.7" width="1.8" height="1.6"/><rect x="479.42" y="440.7" width="1.8" height="1.6"/><rect x="479.42" y="444.7" width="1.8" height="1.6"/><rect x="483.42" y="440.7" width="1.8" height="1.6"/><rect x="483.42" y="444.7" width="1.8" height="1.6"/><rect x="479.42" y="448.7" width="1.8" height="1.6"/><rect x="479.42" y="452.7" width="1.8" height="1.6"/><rect x="483.42" y="448.7" width="1.8" height="1.6"/><rect x="483.42" y="452.7" width="1.8" height="1.6"/><rect x="479.42" y="456.7" width="1.8" height="1.6"/><rect x="479.42" y="460.7" width="1.8" height="1.6"/><rect x="483.42" y="456.7" width="1.8" height="1.6"/><rect x="483.42" y="460.7" width="1.8" height="1.6"/><rect x="479.42" y="464.7" width="1.8" height="1.6"/><rect x="479.42" y="468.7" width="1.8" height="1.6"/><rect x="483.42" y="464.7" width="1.8" height="1.6"/><rect x="483.42" y="468.7" width="1.8" height="1.6"/><rect x="479.42" y="471.7" width="1.8" height="1.6"/><rect x="479.42" y="475.7" width="1.8" height="1.6"/><rect x="483.42" y="471.7" width="1.8" height="1.6"/><rect x="483.42" y="475.7" width="1.8" height="1.6"/><rect x="479.42" y="479.7" width="1.8" height="1.6"/><rect x="479.42" y="483.7" width="1.8" height="1.6"/><rect x="483.42" y="479.7" width="1.8" height="1.6"/><rect x="483.42" y="483.7" width="1.8" height="1.6"/><rect x="479.42" y="487.7" width="1.8" height="1.6"/><rect x="479.42" y="491.7" width="1.8" height="1.6"/><rect x="483.42" y="487.7" width="1.8" height="1.6"/><rect x="483.42" y="491.7" width="1.8" height="1.6"/><rect x="479.42" y="495.7" width="1.8" height="1.6"/><rect x="479.42" y="499.7" width="1.8" height="1.6"/><rect x="483.42" y="495.7" width="1.8" height="1.6"/><rect x="483.42" y="499.7" width="1.8" height="1.6"/><rect x="479.42" y="502.7" width="1.8" height="1.6"/><rect x="479.42" y="506.7" width="1.8" height="1.6"/><rect x="483.42" y="502.7" width="1.8" height="1.6"/><rect x="483.42" y="506.7" width="1.8" height="1.6"/><rect x="479.42" y="510.7" width="1.8" height="1.6"/><rect x="479.42" y="514.7" width="1.8" height="1.6"/><rect x="483.42" y="510.7" width="1.8" height="1.6"/><rect x="483.42" y="514.7" width="1.8" height="1.6"/><rect x="479.42" y="518.7" width="1.8" height="1.6"/><rect x="479.42" y="522.7" width="1.8" height="1.6"/><rect x="483.42" y="518.7" width="1.8" height="1.6"/><rect x="483.42" y="522.7" width="1.8" height="1.6"/><rect x="479.42" y="525.7" width="1.8" height="1.6"/><rect x="479.42" y="529.7" width="1.8" height="1.6"/><rect x="483.42" y="525.7" width="1.8" height="1.6"/><rect x="483.42" y="529.7" width="1.8" height="1.6"/><rect x="479.42" y="533.7" width="1.8" height="1.6"/><rect x="479.42" y="537.7" width="1.8" height="1.6"/><rect x="483.42" y="533.7" width="1.8" height="1.6"/><rect x="483.42" y="537.7" width="1.8" height="1.6"/><rect x="479.42" y="541.7" width="1.8" height="1.6"/><rect x="479.42" y="545.7" width="1.8" height="1.6"/><rect x="483.42" y="541.7" width="1.8" height="1.6"/><rect x="483.42" y="545.7" width="1.8" height="1.6"/><rect x="479.42" y="549.7" width="1.8" height="1.6"/><rect x="479.42" y="553.7" width="1.8" height="1.6"/><rect x="483.42" y="549.7" width="1.8" height="1.6"/><rect x="483.42" y="553.7" width="1.8" height="1.6"/><rect x="479.42" y="556.7" width="1.8" height="1.6"/><rect x="479.42" y="560.7" width="1.8" height="1.6"/><rect x="483.42" y="556.7" width="1.8" height="1.6"/><rect x="483.42" y="560.7" width="1.8" height="1.6"/><rect x="479.42" y="564.7" width="1.8" height="1.6"/><rect x="479.42" y="568.7" width="1.8" height="1.6"/><rect x="483.42" y="564.7" width="1.8" height="1.6"/><rect x="483.42" y="568.7" width="1.8" height="1.6"/><rect x="479.42" y="572.7" width="1.8" height="1.6"/><rect x="479.42" y="576.7" width="1.8" height="1.6"/><rect x="483.42" y="572.7" width="1.8" height="1.6"/><rect x="483.42" y="576.7" width="1.8" height="1.6"/><rect x="479.42" y="579.7" width="1.8" height="1.6"/><rect x="479.42" y="583.7" width="1.8" height="1.6"/><rect x="483.42" y="579.7" width="1.8" height="1.6"/><rect x="483.42" y="583.7" width="1.8" height="1.6"/><rect x="479.42" y="587.7" width="1.8" height="1.6"/><rect x="479.42" y="591.7" width="1.8" height="1.6"/><rect x="483.42" y="587.7" width="1.8" height="1.6"/><rect x="483.42" y="591.7" width="1.8" height="1.6"/><rect x="479.42" y="595.7" width="1.8" height="1.6"/><rect x="479.42" y="599.7" width="1.8" height="1.6"/><rect x="483.42" y="595.7" width="1.8" height="1.6"/><rect x="483.42" y="599.7" width="1.8" height="1.6"/><rect x="479.42" y="603.7" width="1.8" height="1.6"/><rect x="479.42" y="607.7" width="1.8" height="1.6"/><rect x="483.42" y="603.7" width="1.8" height="1.6"/><rect x="483.42" y="607.7" width="1.8" height="1.6"/><rect x="479.42" y="610.7" width="1.8" height="1.6"/><rect x="479.42" y="614.7" width="1.8" height="1.6"/><rect x="483.42" y="610.7" width="1.8" height="1.6"/><rect x="483.42" y="614.7" width="1.8" height="1.6"/><rect x="479.42" y="618.7" width="1.8" height="1.6"/><rect x="479.42" y="622.7" width="1.8" height="1.6"/><rect x="483.42" y="618.7" width="1.8" height="1.6"/><rect x="483.42" y="622.7" width="1.8" height="1.6"/><rect x="479.42" y="626.7" width="1.8" height="1.6"/><rect x="479.42" y="630.7" width="1.8" height="1.6"/><rect x="483.42" y="626.7" width="1.8" height="1.6"/><rect x="483.42" y="630.7" width="1.8" height="1.6"/><rect x="479.42" y="634.7" width="1.8" height="1.6"/><rect x="479.42" y="638.7" width="1.8" height="1.6"/><rect x="483.42" y="634.7" width="1.8" height="1.6"/><rect x="483.42" y="638.7" width="1.8" height="1.6"/><rect x="479.42" y="641.7" width="1.8" height="1.6"/><rect x="479.42" y="645.7" width="1.8" height="1.6"/><rect x="483.42" y="641.7" width="1.8" height="1.6"/><rect x="483.42" y="645.7" width="1.8" height="1.6"/><rect x="479.42" y="649.7" width="1.8" height="1.6"/><rect x="479.42" y="653.7" width="1.8" height="1.6"/><rect x="483.42" y="649.7" width="1.8" height="1.6"/><rect x="483.42" y="653.7" width="1.8" height="1.6"/><rect x="479.42" y="657.7" width="1.8" height="1.6"/><rect x="479.42" y="661.7" width="1.8" height="1.6"/><rect x="483.42" y="657.7" width="1.8" height="1.6"/><rect x="483.42" y="661.7" width="1.8" height="1.6"/><rect x="479.42" y="664.7" width="1.8" height="1.6"/><rect x="479.42" y="668.7" width="1.8" height="1.6"/><rect x="483.42" y="664.7" width="1.8" height="1.6"/><rect x="483.42" y="668.7" width="1.8" height="1.6"/><rect x="479.42" y="672.7" width="1.8" height="1.6"/><rect x="479.42" y="676.7" width="1.8" height="1.6"/><rect x="483.42" y="672.7" width="1.8" height="1.6"/><rect x="483.42" y="676.7" width="1.8" height="1.6"/><rect x="479.42" y="680.7" width="1.8" height="1.6"/><rect x="479.42" y="684.7" width="1.8" height="1.6"/><rect x="483.42" y="680.7" width="1.8" height="1.6"/><rect x="483.42" y="684.7" width="1.8" height="1.6"/><rect x="479.42" y="688.7" width="1.8" height="1.6"/><rect x="479.42" y="692.7" width="1.8" height="1.6"/><rect x="483.42" y="688.7" width="1.8" height="1.6"/><rect x="483.42" y="692.7" width="1.8" height="1.6"/><rect x="479.42" y="695.7" width="1.8" height="1.6"/><rect x="479.42" y="699.7" width="1.8" height="1.6"/><rect x="483.42" y="695.7" width="1.8" height="1.6"/><rect x="483.42" y="699.7" width="1.8" height="1.6"/><rect x="479.42" y="703.7" width="1.8" height="1.6"/><rect x="479.42" y="707.7" width="1.8" height="1.6"/><rect x="483.42" y="703.7" width="1.8" height="1.6"/><rect x="483.42" y="707.7" width="1.8" height="1.6"/><rect x="479.42" y="711.7" width="1.8" height="1.6"/><rect x="479.42" y="715.7" width="1.8" height="1.6"/><rect x="483.42" y="711.7" width="1.8" height="1.6"/><rect x="483.42" y="715.7" width="1.8" height="1.6"/><rect x="479.42" y="718.7" width="1.8" height="1.6"/><rect x="479.42" y="722.7" width="1.8" height="1.6"/><rect x="483.42" y="718.7" width="1.8" height="1.6"/><rect x="483.42" y="722.7" width="1.8" height="1.6"/><rect x="479.42" y="726.7" width="1.8" height="1.6"/><rect x="479.42" y="730.7" width="1.8" height="1.6"/><rect x="483.42" y="726.7" width="1.8" height="1.6"/><rect x="483.42" y="730.7" width="1.8" height="1.6"/><rect x="479.42" y="734.7" width="1.8" height="1.6"/><rect x="479.42" y="738.7" width="1.8" height="1.6"/><rect x="483.42" y="734.7" width="1.8" height="1.6"/><rect x="483.42" y="738.7" width="1.8" height="1.6"/><rect x="479.42" y="742.7" width="1.8" height="1.6"/><rect x="479.42" y="746.7" width="1.8" height="1.6"/><rect x="483.42" y="742.7" width="1.8" height="1.6"/><rect x="483.42" y="746.7" width="1.8" height="1.6"/><rect x="479.42" y="749.7" width="1.8" height="1.6"/><rect x="479.42" y="753.7" width="1.8" height="1.6"/><rect x="483.42" y="749.7" width="1.8" height="1.6"/><rect x="483.42" y="753.7" width="1.8" height="1.6"/><rect x="479.42" y="757.7" width="1.8" height="1.6"/><rect x="479.42" y="761.7" width="1.8" height="1.6"/><rect x="483.42" y="757.7" width="1.8" height="1.6"/><rect x="483.42" y="761.7" width="1.8" height="1.6"/><rect x="479.42" y="765.7" width="1.8" height="1.6"/><rect x="479.42" y="769.7" width="1.8" height="1.6"/><rect x="483.42" y="765.7" width="1.8" height="1.6"/><rect x="483.42" y="769.7" width="1.8" height="1.6"/><rect x="479.42" y="772.7" width="1.8" height="1.6"/><rect x="479.42" y="776.7" width="1.8" height="1.6"/><rect x="483.42" y="772.7" width="1.8" height="1.6"/><rect x="483.42" y="776.7" width="1.8" height="1.6"/><rect x="672.37" y="433.7" width="1.8" height="1.6"/><rect x="672.37" y="437.7" width="1.8" height="1.6"/><rect x="676.37" y="433.7" width="1.8" height="1.6"/><rect x="676.37" y="437.7" width="1.8" height="1.6"/><rect x="672.37" y="440.7" width="1.8" height="1.6"/><rect x="672.37" y="444.7" width="1.8" height="1.6"/><rect x="676.37" y="440.7" width="1.8" height="1.6"/><rect x="676.37" y="444.7" width="1.8" height="1.6"/><rect x="672.37" y="456.7" width="1.8" height="1.6"/><rect x="672.37" y="460.7" width="1.8" height="1.6"/><rect x="676.37" y="456.7" width="1.8" height="1.6"/><rect x="676.37" y="460.7" width="1.8" height="1.6"/><rect x="672.37" y="464.7" width="1.8" height="1.6"/><rect x="672.37" y="468.7" width="1.8" height="1.6"/><rect x="676.37" y="464.7" width="1.8" height="1.6"/><rect x="676.37" y="468.7" width="1.8" height="1.6"/><rect x="672.37" y="471.7" width="1.8" height="1.6"/><rect x="672.37" y="475.7" width="1.8" height="1.6"/><rect x="676.37" y="471.7" width="1.8" height="1.6"/><rect x="676.37" y="475.7" width="1.8" height="1.6"/><rect x="672.37" y="479.7" width="1.8" height="1.6"/><rect x="672.37" y="483.7" width="1.8" height="1.6"/><rect x="676.37" y="479.7" width="1.8" height="1.6"/><rect x="676.37" y="483.7" width="1.8" height="1.6"/><rect x="672.37" y="487.7" width="1.8" height="1.6"/><rect x="672.37" y="491.7" width="1.8" height="1.6"/><rect x="676.37" y="487.7" width="1.8" height="1.6"/><rect x="676.37" y="491.7" width="1.8" height="1.6"/><rect x="672.37" y="495.7" width="1.8" height="1.6"/><rect x="672.37" y="499.7" width="1.8" height="1.6"/><rect x="676.37" y="495.7" width="1.8" height="1.6"/><rect x="676.37" y="499.7" width="1.8" height="1.6"/><rect x="672.37" y="502.7" width="1.8" height="1.6"/><rect x="672.37" y="506.7" width="1.8" height="1.6"/><rect x="676.37" y="502.7" width="1.8" height="1.6"/><rect x="676.37" y="506.7" width="1.8" height="1.6"/><rect x="672.37" y="510.7" width="1.8" height="1.6"/><rect x="672.37" y="514.7" width="1.8" height="1.6"/><rect x="676.37" y="510.7" width="1.8" height="1.6"/><rect x="676.37" y="514.7" width="1.8" height="1.6"/><rect x="672.37" y="518.7" width="1.8" height="1.6"/><rect x="672.37" y="522.7" width="1.8" height="1.6"/><rect x="676.37" y="518.7" width="1.8" height="1.6"/><rect x="676.37" y="522.7" width="1.8" height="1.6"/><rect x="672.37" y="533.7" width="1.8" height="1.6"/><rect x="672.37" y="537.7" width="1.8" height="1.6"/><rect x="676.37" y="533.7" width="1.8" height="1.6"/><rect x="676.37" y="537.7" width="1.8" height="1.6"/><rect x="672.37" y="541.7" width="1.8" height="1.6"/><rect x="672.37" y="545.7" width="1.8" height="1.6"/><rect x="676.37" y="541.7" width="1.8" height="1.6"/><rect x="676.37" y="545.7" width="1.8" height="1.6"/><rect x="672.37" y="549.7" width="1.8" height="1.6"/><rect x="672.37" y="553.7" width="1.8" height="1.6"/><rect x="676.37" y="549.7" width="1.8" height="1.6"/><rect x="676.37" y="553.7" width="1.8" height="1.6"/><rect x="672.37" y="556.7" width="1.8" height="1.6"/><rect x="672.37" y="560.7" width="1.8" height="1.6"/><rect x="676.37" y="556.7" width="1.8" height="1.6"/><rect x="676.37" y="560.7" width="1.8" height="1.6"/><rect x="795.86" y="433.7" width="1.8" height="1.6"/><rect x="795.86" y="437.7" width="1.8" height="1.6"/><rect x="799.86" y="433.7" width="1.8" height="1.6"/><rect x="799.86" y="437.7" width="1.8" height="1.6"/><rect x="795.86" y="440.7" width="1.8" height="1.6"/><rect x="795.86" y="444.7" width="1.8" height="1.6"/><rect x="799.86" y="440.7" width="1.8" height="1.6"/><rect x="799.86" y="444.7" width="1.8" height="1.6"/><rect x="795.86" y="448.7" width="1.8" height="1.6"/><rect x="795.86" y="452.7" width="1.8" height="1.6"/><rect x="799.86" y="448.7" width="1.8" height="1.6"/><rect x="799.86" y="452.7" width="1.8" height="1.6"/><rect x="795.86" y="456.7" width="1.8" height="1.6"/><rect x="795.86" y="460.7" width="1.8" height="1.6"/><rect x="799.86" y="456.7" width="1.8" height="1.6"/><rect x="799.86" y="460.7" width="1.8" height="1.6"/><rect x="795.86" y="464.7" width="1.8" height="1.6"/><rect x="795.86" y="468.7" width="1.8" height="1.6"/><rect x="799.86" y="464.7" width="1.8" height="1.6"/><rect x="799.86" y="468.7" width="1.8" height="1.6"/><rect x="795.86" y="471.7" width="1.8" height="1.6"/><rect x="795.86" y="475.7" width="1.8" height="1.6"/><rect x="799.86" y="471.7" width="1.8" height="1.6"/><rect x="799.86" y="475.7" width="1.8" height="1.6"/><rect x="795.86" y="487.7" width="1.8" height="1.6"/><rect x="795.86" y="491.7" width="1.8" height="1.6"/><rect x="799.86" y="487.7" width="1.8" height="1.6"/><rect x="799.86" y="491.7" width="1.8" height="1.6"/><rect x="795.86" y="495.7" width="1.8" height="1.6"/><rect x="795.86" y="499.7" width="1.8" height="1.6"/><rect x="799.86" y="495.7" width="1.8" height="1.6"/><rect x="799.86" y="499.7" width="1.8" height="1.6"/><rect x="795.86" y="502.7" width="1.8" height="1.6"/><rect x="795.86" y="506.7" width="1.8" height="1.6"/><rect x="799.86" y="502.7" width="1.8" height="1.6"/><rect x="799.86" y="506.7" width="1.8" height="1.6"/><rect x="795.86" y="510.7" width="1.8" height="1.6"/><rect x="795.86" y="514.7" width="1.8" height="1.6"/><rect x="799.86" y="510.7" width="1.8" height="1.6"/><rect x="799.86" y="514.7" width="1.8" height="1.6"/><rect x="795.86" y="518.7" width="1.8" height="1.6"/><rect x="795.86" y="522.7" width="1.8" height="1.6"/><rect x="799.86" y="518.7" width="1.8" height="1.6"/><rect x="799.86" y="522.7" width="1.8" height="1.6"/><rect x="795.86" y="525.7" width="1.8" height="1.6"/><rect x="795.86" y="529.7" width="1.8" height="1.6"/><rect x="799.86" y="525.7" width="1.8" height="1.6"/><rect x="799.86" y="529.7" width="1.8" height="1.6"/><rect x="919.35" y="495.7" width="1.8" height="1.6"/><rect x="919.35" y="499.7" width="1.8" height="1.6"/><rect x="923.35" y="495.7" width="1.8" height="1.6"/><rect x="923.35" y="499.7" width="1.8" height="1.6"/><rect x="919.35" y="502.7" width="1.8" height="1.6"/><rect x="919.35" y="506.7" width="1.8" height="1.6"/><rect x="923.35" y="502.7" width="1.8" height="1.6"/><rect x="923.35" y="506.7" width="1.8" height="1.6"/><rect x="919.35" y="510.7" width="1.8" height="1.6"/><rect x="919.35" y="514.7" width="1.8" height="1.6"/><rect x="923.35" y="510.7" width="1.8" height="1.6"/><rect x="923.35" y="514.7" width="1.8" height="1.6"/><rect x="919.35" y="518.7" width="1.8" height="1.6"/><rect x="919.35" y="522.7" width="1.8" height="1.6"/><rect x="923.35" y="518.7" width="1.8" height="1.6"/><rect x="923.35" y="522.7" width="1.8" height="1.6"/><rect x="919.35" y="533.7" width="1.8" height="1.6"/><rect x="919.35" y="537.7" width="1.8" height="1.6"/><rect x="923.35" y="533.7" width="1.8" height="1.6"/><rect x="923.35" y="537.7" width="1.8" height="1.6"/><rect x="919.35" y="541.7" width="1.8" height="1.6"/><rect x="919.35" y="545.7" width="1.8" height="1.6"/><rect x="923.35" y="541.7" width="1.8" height="1.6"/><rect x="923.35" y="545.7" width="1.8" height="1.6"/><rect x="919.35" y="549.7" width="1.8" height="1.6"/><rect x="919.35" y="553.7" width="1.8" height="1.6"/><rect x="923.35" y="549.7" width="1.8" height="1.6"/><rect x="923.35" y="553.7" width="1.8" height="1.6"/><rect x="919.35" y="556.7" width="1.8" height="1.6"/><rect x="919.35" y="560.7" width="1.8" height="1.6"/><rect x="923.35" y="556.7" width="1.8" height="1.6"/><rect x="923.35" y="560.7" width="1.8" height="1.6"/><rect x="1104.58" y="495.7" width="1.8" height="1.6"/><rect x="1104.58" y="499.7" width="1.8" height="1.6"/><rect x="1108.58" y="495.7" width="1.8" height="1.6"/><rect x="1108.58" y="499.7" width="1.8" height="1.6"/><rect x="1104.58" y="533.7" width="1.8" height="1.6"/><rect x="1104.58" y="537.7" width="1.8" height="1.6"/><rect x="1108.58" y="533.7" width="1.8" height="1.6"/><rect x="1108.58" y="537.7" width="1.8" height="1.6"/><rect x="1104.58" y="541.7" width="1.8" height="1.6"/><rect x="1104.58" y="545.7" width="1.8" height="1.6"/><rect x="1108.58" y="541.7" width="1.8" height="1.6"/><rect x="1108.58" y="545.7" width="1.8" height="1.6"/><rect x="1104.58" y="549.7" width="1.8" height="1.6"/><rect x="1104.58" y="553.7" width="1.8" height="1.6"/><rect x="1108.58" y="549.7" width="1.8" height="1.6"/><rect x="1108.58" y="553.7" width="1.8" height="1.6"/><rect x="1104.58" y="556.7" width="1.8" height="1.6"/><rect x="1104.58" y="560.7" width="1.8" height="1.6"/><rect x="1108.58" y="556.7" width="1.8" height="1.6"/><rect x="1108.58" y="560.7" width="1.8" height="1.6"/><rect x="657.01" y="695.7" width="1.8" height="1.6"/><rect x="657.01" y="699.7" width="1.8" height="1.6"/><rect x="661.01" y="695.7" width="1.8" height="1.6"/><rect x="661.01" y="699.7" width="1.8" height="1.6"/><rect x="657.01" y="703.7" width="1.8" height="1.6"/><rect x="657.01" y="707.7" width="1.8" height="1.6"/><rect x="661.01" y="703.7" width="1.8" height="1.6"/><rect x="661.01" y="707.7" width="1.8" height="1.6"/><rect x="657.01" y="711.7" width="1.8" height="1.6"/><rect x="657.01" y="715.7" width="1.8" height="1.6"/><rect x="661.01" y="711.7" width="1.8" height="1.6"/><rect x="661.01" y="715.7" width="1.8" height="1.6"/><rect x="657.01" y="718.7" width="1.8" height="1.6"/><rect x="657.01" y="722.7" width="1.8" height="1.6"/><rect x="661.01" y="718.7" width="1.8" height="1.6"/><rect x="661.01" y="722.7" width="1.8" height="1.6"/><rect x="657.01" y="726.7" width="1.8" height="1.6"/><rect x="657.01" y="730.7" width="1.8" height="1.6"/><rect x="661.01" y="726.7" width="1.8" height="1.6"/><rect x="661.01" y="730.7" width="1.8" height="1.6"/><rect x="795.86" y="695.7" width="1.8" height="1.6"/><rect x="795.86" y="699.7" width="1.8" height="1.6"/><rect x="799.86" y="695.7" width="1.8" height="1.6"/><rect x="799.86" y="699.7" width="1.8" height="1.6"/><rect x="795.86" y="703.7" width="1.8" height="1.6"/><rect x="795.86" y="707.7" width="1.8" height="1.6"/><rect x="799.86" y="703.7" width="1.8" height="1.6"/><rect x="799.86" y="707.7" width="1.8" height="1.6"/><rect x="795.86" y="711.7" width="1.8" height="1.6"/><rect x="795.86" y="715.7" width="1.8" height="1.6"/><rect x="799.86" y="711.7" width="1.8" height="1.6"/><rect x="799.86" y="715.7" width="1.8" height="1.6"/><rect x="795.86" y="718.7" width="1.8" height="1.6"/><rect x="795.86" y="722.7" width="1.8" height="1.6"/><rect x="799.86" y="718.7" width="1.8" height="1.6"/><rect x="799.86" y="722.7" width="1.8" height="1.6"/></g>
<g fill="#ffffb0" stroke="#850000" stroke-width="1.15"><rect x="150.5" y="196.5" width="92" height="77"/><rect x="343.5" y="158.5" width="107" height="99"/><rect x="598.5" y="119.5" width="91" height="192"/><rect x="798.5" y="119.5" width="108" height="161"/><rect x="1046.5" y="111.5" width="60" height="193"/><rect x="165.5" y="428.5" width="61" height="223"/><rect x="335.5" y="389.5" width="123" height="393"/><rect x="698.5" y="428.5" width="76" height="138"/><rect x="945.5" y="490.5" width="138" height="76"/><rect x="683.5" y="691.5" width="91" height="45"/></g>
<path d="M1021.35 122.55L1022.35 124.25L1023.35 122.55L1024.35 124.25L1025.35 122.55L1026.35 124.25L1027.35 122.55L1028.35 124.25L1029.35 122.55L1030.35 124.25L1031.35 122.55L1032.35 124.25L1033.35 122.55L1034.35 124.25L1035.35 122.55L1036.35 124.25L1037.35 122.55L1038.35 124.25L1039.35 122.55L1040.35 124.25L1041.35 122.55L1042.35 124.25L1043.35 122.55L1044.35 124.25L1045.35 122.55L1046.35 124.25M1021.35 138.55L1022.35 140.25L1023.35 138.55L1024.35 140.25L1025.35 138.55L1026.35 140.25L1027.35 138.55L1028.35 140.25L1029.35 138.55L1030.35 140.25L1031.35 138.55L1032.35 140.25L1033.35 138.55L1034.35 140.25L1035.35 138.55L1036.35 140.25L1037.35 138.55L1038.35 140.25L1039.35 138.55L1040.35 140.25L1041.35 138.55L1042.35 140.25L1043.35 138.55L1044.35 140.25L1045.35 138.55L1046.35 140.25M1021.35 145.55L1022.35 147.25L1023.35 145.55L1024.35 147.25L1025.35 145.55L1026.35 147.25L1027.35 145.55L1028.35 147.25L1029.35 145.55L1030.35 147.25L1031.35 145.55L1032.35 147.25L1033.35 145.55L1034.35 147.25L1035.35 145.55L1036.35 147.25L1037.35 145.55L1038.35 147.25L1039.35 145.55L1040.35 147.25L1041.35 145.55L1042.35 147.25L1043.35 145.55L1044.35 147.25L1045.35 145.55L1046.35 147.25M1021.35 161.55L1022.35 163.25L1023.35 161.55L1024.35 163.25L1025.35 161.55L1026.35 163.25L1027.35 161.55L1028.35 163.25L1029.35 161.55L1030.35 163.25L1031.35 161.55L1032.35 163.25L1033.35 161.55L1034.35 163.25L1035.35 161.55L1036.35 163.25L1037.35 161.55L1038.35 163.25L1039.35 161.55L1040.35 163.25L1041.35 161.55L1042.35 163.25L1043.35 161.55L1044.35 163.25L1045.35 161.55L1046.35 163.25M1021.35 169.55L1022.35 171.25L1023.35 169.55L1024.35 171.25L1025.35 169.55L1026.35 171.25L1027.35 169.55L1028.35 171.25L1029.35 169.55L1030.35 171.25L1031.35 169.55L1032.35 171.25L1033.35 169.55L1034.35 171.25L1035.35 169.55L1036.35 171.25L1037.35 169.55L1038.35 171.25L1039.35 169.55L1040.35 171.25L1041.35 169.55L1042.35 171.25L1043.35 169.55L1044.35 171.25L1045.35 169.55L1046.35 171.25M1021.35 176.55L1022.35 178.25L1023.35 176.55L1024.35 178.25L1025.35 176.55L1026.35 178.25L1027.35 176.55L1028.35 178.25L1029.35 176.55L1030.35 178.25L1031.35 176.55L1032.35 178.25L1033.35 176.55L1034.35 178.25L1035.35 176.55L1036.35 178.25L1037.35 176.55L1038.35 178.25L1039.35 176.55L1040.35 178.25L1041.35 176.55L1042.35 178.25L1043.35 176.55L1044.35 178.25L1045.35 176.55L1046.35 178.25M1021.35 184.55L1022.35 186.25L1023.35 184.55L1024.35 186.25L1025.35 184.55L1026.35 186.25L1027.35 184.55L1028.35 186.25L1029.35 184.55L1030.35 186.25L1031.35 184.55L1032.35 186.25L1033.35 184.55L1034.35 186.25L1035.35 184.55L1036.35 186.25L1037.35 184.55L1038.35 186.25L1039.35 184.55L1040.35 186.25L1041.35 184.55L1042.35 186.25L1043.35 184.55L1044.35 186.25L1045.35 184.55L1046.35 186.25M1021.35 223.55L1022.35 225.25L1023.35 223.55L1024.35 225.25L1025.35 223.55L1026.35 225.25L1027.35 223.55L1028.35 225.25L1029.35 223.55L1030.35 225.25L1031.35 223.55L1032.35 225.25L1033.35 223.55L1034.35 225.25L1035.35 223.55L1036.35 225.25L1037.35 223.55L1038.35 225.25L1039.35 223.55L1040.35 225.25L1041.35 223.55L1042.35 225.25L1043.35 223.55L1044.35 225.25L1045.35 223.55L1046.35 225.25M1021.35 230.55L1022.35 232.25L1023.35 230.55L1024.35 232.25L1025.35 230.55L1026.35 232.25L1027.35 230.55L1028.35 232.25L1029.35 230.55L1030.35 232.25L1031.35 230.55L1032.35 232.25L1033.35 230.55L1034.35 232.25L1035.35 230.55L1036.35 232.25L1037.35 230.55L1038.35 232.25L1039.35 230.55L1040.35 232.25L1041.35 230.55L1042.35 232.25L1043.35 230.55L1044.35 232.25L1045.35 230.55L1046.35 232.25M1021.35 246.55L1022.35 248.25L1023.35 246.55L1024.35 248.25L1025.35 246.55L1026.35 248.25L1027.35 246.55L1028.35 248.25L1029.35 246.55L1030.35 248.25L1031.35 246.55L1032.35 248.25L1033.35 246.55L1034.35 248.25L1035.35 246.55L1036.35 248.25L1037.35 246.55L1038.35 248.25L1039.35 246.55L1040.35 248.25L1041.35 246.55L1042.35 248.25L1043.35 246.55L1044.35 248.25L1045.35 246.55L1046.35 248.25M1021.35 253.55L1022.35 255.25L1023.35 253.55L1024.35 255.25L1025.35 253.55L1026.35 255.25L1027.35 253.55L1028.35 255.25L1029.35 253.55L1030.35 255.25L1031.35 253.55L1032.35 255.25L1033.35 253.55L1034.35 255.25L1035.35 253.55L1036.35 255.25L1037.35 253.55L1038.35 255.25L1039.35 253.55L1040.35 255.25L1041.35 253.55L1042.35 255.25L1043.35 253.55L1044.35 255.25L1045.35 253.55L1046.35 255.25M1021.35 269.55L1022.35 271.25L1023.35 269.55L1024.35 271.25L1025.35 269.55L1026.35 271.25L1027.35 269.55L1028.35 271.25L1029.35 269.55L1030.35 271.25L1031.35 269.55L1032.35 271.25L1033.35 269.55L1034.35 271.25L1035.35 269.55L1036.35 271.25L1037.35 269.55L1038.35 271.25L1039.35 269.55L1040.35 271.25L1041.35 269.55L1042.35 271.25L1043.35 269.55L1044.35 271.25L1045.35 269.55L1046.35 271.25M1021.35 277.55L1022.35 279.25L1023.35 277.55L1024.35 279.25L1025.35 277.55L1026.35 279.25L1027.35 277.55L1028.35 279.25L1029.35 277.55L1030.35 279.25L1031.35 277.55L1032.35 279.25L1033.35 277.55L1034.35 279.25L1035.35 277.55L1036.35 279.25L1037.35 277.55L1038.35 279.25L1039.35 277.55L1040.35 279.25L1041.35 277.55L1042.35 279.25L1043.35 277.55L1044.35 279.25L1045.35 277.55L1046.35 279.25M1021.35 292.55L1022.35 294.25L1023.35 292.55L1024.35 294.25L1025.35 292.55L1026.35 294.25L1027.35 292.55L1028.35 294.25L1029.35 292.55L1030.35 294.25L1031.35 292.55L1032.35 294.25L1033.35 292.55L1034.35 294.25L1035.35 292.55L1036.35 294.25L1037.35 292.55L1038.35 294.25L1039.35 292.55L1040.35 294.25L1041.35 292.55L1042.35 294.25L1043.35 292.55L1044.35 294.25L1045.35 292.55L1046.35 294.25M1021.35 300.55L1022.35 302.25L1023.35 300.55L1024.35 302.25L1025.35 300.55L1026.35 302.25L1027.35 300.55L1028.35 302.25L1029.35 300.55L1030.35 302.25L1031.35 300.55L1032.35 302.25L1033.35 300.55L1034.35 302.25L1035.35 300.55L1036.35 302.25L1037.35 300.55L1038.35 302.25L1039.35 300.55L1040.35 302.25L1041.35 300.55L1042.35 302.25L1043.35 300.55L1044.35 302.25L1045.35 300.55L1046.35 302.25M920.25 501.55L921.25 503.25L922.25 501.55L923.25 503.25L924.25 501.55L925.25 503.25L926.25 501.55L927.25 503.25L928.25 501.55L929.25 503.25L930.25 501.55L931.25 503.25L932.25 501.55L933.25 503.25L934.25 501.55L935.25 503.25L936.25 501.55L937.25 503.25L938.25 501.55L939.25 503.25L940.25 501.55L941.25 503.25L942.25 501.55L943.25 503.25L944.25 501.55L945.25 503.25M920.25 508.55L921.25 510.25L922.25 508.55L923.25 510.25L924.25 508.55L925.25 510.25L926.25 508.55L927.25 510.25L928.25 508.55L929.25 510.25L930.25 508.55L931.25 510.25L932.25 508.55L933.25 510.25L934.25 508.55L935.25 510.25L936.25 508.55L937.25 510.25L938.25 508.55L939.25 510.25L940.25 508.55L941.25 510.25L942.25 508.55L943.25 510.25L944.25 508.55L945.25 510.25M920.25 516.55L921.25 518.25L922.25 516.55L923.25 518.25L924.25 516.55L925.25 518.25L926.25 516.55L927.25 518.25L928.25 516.55L929.25 518.25L930.25 516.55L931.25 518.25L932.25 516.55L933.25 518.25L934.25 516.55L935.25 518.25L936.25 516.55L937.25 518.25L938.25 516.55L939.25 518.25L940.25 516.55L941.25 518.25L942.25 516.55L943.25 518.25L944.25 516.55L945.25 518.25M920.25 524.55L921.25 526.25L922.25 524.55L923.25 526.25L924.25 524.55L925.25 526.25L926.25 524.55L927.25 526.25L928.25 524.55L929.25 526.25L930.25 524.55L931.25 526.25L932.25 524.55L933.25 526.25L934.25 524.55L935.25 526.25L936.25 524.55L937.25 526.25L938.25 524.55L939.25 526.25L940.25 524.55L941.25 526.25L942.25 524.55L943.25 526.25L944.25 524.55L945.25 526.25M920.25 539.55L921.25 541.25L922.25 539.55L923.25 541.25L924.25 539.55L925.25 541.25L926.25 539.55L927.25 541.25L928.25 539.55L929.25 541.25L930.25 539.55L931.25 541.25L932.25 539.55L933.25 541.25L934.25 539.55L935.25 541.25L936.25 539.55L937.25 541.25L938.25 539.55L939.25 541.25L940.25 539.55L941.25 541.25L942.25 539.55L943.25 541.25L944.25 539.55L945.25 541.25M920.25 547.55L921.25 549.25L922.25 547.55L923.25 549.25L924.25 547.55L925.25 549.25L926.25 547.55L927.25 549.25L928.25 547.55L929.25 549.25L930.25 547.55L931.25 549.25L932.25 547.55L933.25 549.25L934.25 547.55L935.25 549.25L936.25 547.55L937.25 549.25L938.25 547.55L939.25 549.25L940.25 547.55L941.25 549.25L942.25 547.55L943.25 549.25L944.25 547.55L945.25 549.25M920.25 555.55L921.25 557.25L922.25 555.55L923.25 557.25L924.25 555.55L925.25 557.25L926.25 555.55L927.25 557.25L928.25 555.55L929.25 557.25L930.25 555.55L931.25 557.25L932.25 555.55L933.25 557.25L934.25 555.55L935.25 557.25L936.25 555.55L937.25 557.25L938.25 555.55L939.25 557.25L940.25 555.55L941.25 557.25L942.25 555.55L943.25 557.25L944.25 555.55L945.25 557.25M920.25 562.55L921.25 564.25L922.25 562.55L923.25 564.25L924.25 562.55L925.25 564.25L926.25 562.55L927.25 564.25L928.25 562.55L929.25 564.25L930.25 562.55L931.25 564.25L932.25 562.55L933.25 564.25L934.25 562.55L935.25 564.25L936.25 562.55L937.25 564.25L938.25 562.55L939.25 564.25L940.25 562.55L941.25 564.25L942.25 562.55L943.25 564.25L944.25 562.55L945.25 564.25M1083.5 501.55L1084.5 503.25L1085.5 501.55L1086.5 503.25L1087.5 501.55L1088.5 503.25L1089.5 501.55L1090.5 503.25L1091.5 501.55L1092.5 503.25L1093.5 501.55L1094.5 503.25L1095.5 501.55L1096.5 503.25L1097.5 501.55L1098.5 503.25L1099.5 501.55L1100.5 503.25L1101.5 501.55L1102.5 503.25L1103.5 501.55L1104.5 503.25L1105.5 501.55L1106.5 503.25L1107.5 501.55L1108.5 503.25" stroke="#ff5a1e" stroke-width="0.8" fill="none"/>
<path d="M150.5 204.5H127.09M150.5 212.5H127.09M150.5 220.5H127.09M150.5 227.5H127.09M150.5 235.5H127.09M150.5 243.5H127.09M242.5 204.5H266.42M242.5 220.5H266.42M242.5 235.5H266.42M242.5 243.5H266.42M242.5 258.5H266.42M242.5 266.5H266.42M450.5 166.5H474.8M450.5 173.5H474.8M450.5 181.5H474.8M450.5 179.8L447.5 181.5L450.5 183.2M450.5 189.5H474.8M450.5 187.8L447.5 189.5L450.5 191.2M450.5 196.5H474.8M450.5 194.8L447.5 196.5L450.5 198.2M450.5 204.5H474.8M450.5 202.8L447.5 204.5L450.5 206.2M450.5 212.5H474.8M450.5 210.8L447.5 212.5L450.5 214.2M450.5 220.5H474.8M450.5 218.8L447.5 220.5L450.5 222.2M450.5 227.5H474.8M450.5 225.8L447.5 227.5L450.5 229.2M450.5 235.5H474.8M450.5 233.8L447.5 235.5L450.5 237.2M450.5 243.5H474.8M450.5 250.5H474.8M689.5 127.5H714.06M689.5 135.5H714.06M689.5 142.5H714.06M689.5 150.5H714.06M689.5 158.5H714.06M689.5 166.5H714.06M689.5 173.5H714.06M689.5 181.5H714.06M689.5 189.5H714.06M689.5 196.5H714.06M689.5 204.5H714.06M689.5 212.5H714.06M689.5 220.5H714.06M689.5 218.8L686.5 220.5L689.5 222.2M689.5 227.5H714.06M689.5 225.8L686.5 227.5L689.5 229.2M689.5 235.5H714.06M689.5 233.8L686.5 235.5L689.5 237.2M689.5 243.5H714.06M689.5 241.8L686.5 243.5L689.5 245.2M689.5 250.5H714.06M689.5 248.8L686.5 250.5L689.5 252.2M689.5 258.5H714.06M689.5 256.8L686.5 258.5L689.5 260.2M689.5 266.5H714.06M689.5 264.8L686.5 266.5L689.5 268.2M689.5 274.5H714.06M689.5 272.8L686.5 274.5L689.5 276.2M689.5 281.5H714.06M689.5 289.5H714.06M689.5 297.5H714.06M689.5 305.5H714.06M906.5 127.5H930.63M906.5 135.5H930.63M906.5 142.5H930.63M906.5 150.5H930.63M906.5 158.5H930.63M906.5 166.5H930.63M906.5 173.5H930.63M906.5 181.5H930.63M906.5 189.5H930.63M906.5 196.5H930.63M906.5 204.5H930.63M906.5 212.5H930.63M906.5 220.5H930.63M906.5 227.5H930.63M906.5 235.5H930.63M906.5 243.5H930.63M906.5 250.5H930.63M906.5 258.5H930.63M906.5 256.8L903.5 258.5L906.5 260.2M906.5 266.5H930.63M906.5 264.8L903.5 266.5L906.5 268.2M906.5 274.5H930.63M1046.5 119.5H1023.15M1046.5 127.5H1023.15M1046.5 135.5H1023.15M1046.5 133.8L1049.5 135.5L1046.5 137.2M1046.5 142.5H1023.15M1046.5 158.5H1023.15M1046.5 156.8L1049.5 158.5L1046.5 160.2M1046.5 166.5H1023.15M1046.5 173.5H1023.15M1046.5 181.5H1023.15M1046.5 196.5H1023.15M1046.5 204.5H1023.15M1046.5 220.5H1023.15M1046.5 227.5H1023.15M1046.5 243.5H1023.15M1046.5 250.5H1023.15M1046.5 266.5H1023.15M1046.5 274.5H1023.15M1046.5 289.5H1023.15M1046.5 297.5H1023.15M165.5 436.5H142.53M165.5 443.5H142.53M165.5 451.5H142.53M165.5 459.5H142.53M165.5 467.5H142.53M165.5 474.5H142.53M165.5 482.5H142.53M165.5 490.5H142.53M165.5 498.5H142.53M165.5 505.5H142.53M165.5 513.5H142.53M165.5 521.5H142.53M165.5 528.5H142.53M165.5 536.5H142.53M165.5 544.5H142.53M165.5 552.5H142.53M165.5 559.5H142.53M165.5 567.5H142.53M165.5 575.5H142.53M165.5 582.5H142.53M165.5 590.5H142.53M165.5 598.5H142.53M165.5 606.5H142.53M165.5 613.5H142.53M165.5 621.5H142.53M165.5 629.5H142.53M226.5 436.5H250.98M226.5 443.5H250.98M226.5 451.5H250.98M226.5 459.5H250.98M226.5 467.5H250.98M226.5 474.5H250.98M226.5 482.5H250.98M226.5 490.5H250.98M226.5 498.5H250.98M226.5 505.5H250.98M226.5 513.5H250.98M226.5 521.5H250.98M226.5 528.5H250.98M226.5 536.5H250.98M226.5 544.5H250.98M226.5 552.5H250.98M226.5 559.5H250.98M226.5 567.5H250.98M226.5 575.5H250.98M226.5 582.5H250.98M226.5 590.5H250.98M226.5 598.5H250.98M226.5 606.5H250.98M226.5 613.5H250.98M226.5 621.5H250.98M226.5 629.5H250.98M226.5 644.5H250.98M458.5 397.5H482.52M458.5 405.5H482.52M458.5 413.5H482.52M458.5 420.5H482.52M458.5 428.5H482.52M458.5 436.5H482.52M458.5 443.5H482.52M458.5 441.8L455.5 443.5L458.5 445.2M458.5 451.5H482.52M458.5 459.5H482.52M458.5 467.5H482.52M458.5 474.5H482.52M458.5 482.5H482.52M458.5 490.5H482.52M458.5 498.5H482.52M458.5 505.5H482.52M458.5 513.5H482.52M458.5 521.5H482.52M458.5 528.5H482.52M458.5 536.5H482.52M458.5 544.5H482.52M458.5 552.5H482.52M458.5 559.5H482.52M458.5 557.8L455.5 559.5L458.5 561.2M458.5 567.5H482.52M458.5 565.8L455.5 567.5L458.5 569.2M458.5 575.5H482.52M458.5 573.8L455.5 575.5L458.5 577.2M458.5 582.5H482.52M458.5 580.8L455.5 582.5L458.5 584.2M458.5 590.5H482.52M458.5 588.8L455.5 590.5L458.5 592.2M458.5 598.5H482.52M458.5 596.8L455.5 598.5L458.5 600.2M458.5 606.5H482.52M458.5 604.8L455.5 606.5L458.5 608.2M458.5 613.5H482.52M458.5 611.8L455.5 613.5L458.5 615.2M458.5 621.5H482.52M458.5 629.5H482.52M458.5 637.5H482.52M458.5 644.5H482.52M458.5 652.5H482.52M458.5 660.5H482.52M458.5 667.5H482.52M458.5 675.5H482.52M458.5 683.5H482.52M458.5 691.5H482.52M458.5 698.5H482.52M458.5 706.5H482.52M458.5 714.5H482.52M458.5 721.5H482.52M458.5 729.5H482.52M458.5 737.5H482.52M458.5 745.5H482.52M458.5 752.5H482.52M458.5 760.5H482.52M458.5 768.5H482.52M458.5 775.5H482.52M698.5 436.5H675.07M698.5 443.5H675.07M698.5 459.5H675.07M698.5 467.5H675.07M698.5 474.5H675.07M698.5 482.5H675.07M698.5 490.5H675.07M698.5 498.5H675.07M698.5 505.5H675.07M698.5 513.5H675.07M698.5 521.5H675.07M698.5 536.5H675.07M698.5 544.5H675.07M698.5 552.5H675.07M698.5 559.5H675.07M774.5 436.5H798.96M774.5 443.5H798.96M774.5 451.5H798.96M774.5 459.5H798.96M774.5 467.5H798.96M774.5 474.5H798.96M774.5 490.5H798.96M774.5 498.5H798.96M774.5 505.5H798.96M774.5 513.5H798.96M774.5 521.5H798.96M774.5 528.5H798.96M945.5 498.5H922.05M945.5 496.8L948.5 498.5L945.5 500.2M945.5 505.5H922.05M945.5 503.8L948.5 505.5L945.5 507.2M945.5 513.5H922.05M945.5 511.8L948.5 513.5L945.5 515.2M945.5 521.5H922.05M945.5 519.8L948.5 521.5L945.5 523.2M945.5 536.5H922.05M945.5 544.5H922.05M945.5 552.5H922.05M945.5 559.5H922.05M1083.5 498.5H1107.68M1083.5 536.5H1107.68M1083.5 544.5H1107.68M1083.5 552.5H1107.68M1083.5 559.5H1107.68M683.5 698.5H659.71M683.5 706.5H659.71M683.5 714.5H659.71M683.5 721.5H659.71M683.5 729.5H659.71M774.5 698.5H798.96M774.5 706.5H798.96M774.5 714.5H798.96M774.5 721.5H798.96" stroke="#000" stroke-width="1" fill="none"/>
<path d="M453.05 166.6L454.75 165.05L456.65 165.05L456.65 168.15L454.75 168.15ZM460.75 166.6L459.15 165.05L457.25 165.05L457.25 168.15L459.15 168.15ZM453.05 173.6L454.75 172.05L456.65 172.05L456.65 175.15L454.75 175.15ZM460.75 173.6L459.15 172.05L457.25 172.05L457.25 175.15L459.15 175.15ZM453.05 181.6L454.75 180.05L456.65 180.05L456.65 183.15L454.75 183.15ZM460.75 181.6L459.15 180.05L457.25 180.05L457.25 183.15L459.15 183.15ZM453.05 189.6L454.75 188.05L456.65 188.05L456.65 191.15L454.75 191.15ZM460.75 189.6L459.15 188.05L457.25 188.05L457.25 191.15L459.15 191.15ZM453.05 196.6L454.75 195.05L456.65 195.05L456.65 198.15L454.75 198.15ZM460.75 196.6L459.15 195.05L457.25 195.05L457.25 198.15L459.15 198.15ZM453.05 204.6L454.75 203.05L456.65 203.05L456.65 206.15L454.75 206.15ZM460.75 204.6L459.15 203.05L457.25 203.05L457.25 206.15L459.15 206.15ZM453.05 212.6L454.75 211.05L456.65 211.05L456.65 214.15L454.75 214.15ZM460.75 212.6L459.15 211.05L457.25 211.05L457.25 214.15L459.15 214.15ZM453.05 220.6L454.75 219.05L456.65 219.05L456.65 222.15L454.75 222.15ZM460.75 220.6L459.15 219.05L457.25 219.05L457.25 222.15L459.15 222.15ZM453.05 227.6L454.75 226.05L456.65 226.05L456.65 229.15L454.75 229.15ZM460.75 227.6L459.15 226.05L457.25 226.05L457.25 229.15L459.15 229.15ZM453.05 235.6L454.75 234.05L456.65 234.05L456.65 237.15L454.75 237.15ZM460.75 235.6L459.15 234.05L457.25 234.05L457.25 237.15L459.15 237.15ZM453.05 243.6L454.75 242.05L456.65 242.05L456.65 245.15L454.75 245.15ZM460.75 243.6L459.15 242.05L457.25 242.05L457.25 245.15L459.15 245.15ZM453.05 250.6L454.75 249.05L456.65 249.05L456.65 252.15L454.75 252.15ZM460.75 250.6L459.15 249.05L457.25 249.05L457.25 252.15L459.15 252.15ZM692.31 127.6L694.01 126.05L695.91 126.05L695.91 129.15L694.01 129.15ZM700.01 127.6L698.41 126.05L696.51 126.05L696.51 129.15L698.41 129.15ZM692.31 135.6L694.01 134.05L695.91 134.05L695.91 137.15L694.01 137.15ZM700.01 135.6L698.41 134.05L696.51 134.05L696.51 137.15L698.41 137.15ZM692.31 142.6L694.01 141.05L695.91 141.05L695.91 144.15L694.01 144.15ZM700.01 142.6L698.41 141.05L696.51 141.05L696.51 144.15L698.41 144.15ZM692.31 150.6L694.01 149.05L695.91 149.05L695.91 152.15L694.01 152.15ZM700.01 150.6L698.41 149.05L696.51 149.05L696.51 152.15L698.41 152.15ZM692.31 158.6L694.01 157.05L695.91 157.05L695.91 160.15L694.01 160.15ZM700.01 158.6L698.41 157.05L696.51 157.05L696.51 160.15L698.41 160.15ZM692.31 166.6L694.01 165.05L695.91 165.05L695.91 168.15L694.01 168.15ZM700.01 166.6L698.41 165.05L696.51 165.05L696.51 168.15L698.41 168.15ZM692.31 173.6L694.01 172.05L695.91 172.05L695.91 175.15L694.01 175.15ZM700.01 173.6L698.41 172.05L696.51 172.05L696.51 175.15L698.41 175.15ZM692.31 181.6L694.01 180.05L695.91 180.05L695.91 183.15L694.01 183.15ZM700.01 181.6L698.41 180.05L696.51 180.05L696.51 183.15L698.41 183.15ZM692.31 189.6L694.01 188.05L695.91 188.05L695.91 191.15L694.01 191.15ZM700.01 189.6L698.41 188.05L696.51 188.05L696.51 191.15L698.41 191.15ZM692.31 196.6L694.01 195.05L695.91 195.05L695.91 198.15L694.01 198.15ZM700.01 196.6L698.41 195.05L696.51 195.05L696.51 198.15L698.41 198.15ZM692.31 204.6L694.01 203.05L695.91 203.05L695.91 206.15L694.01 206.15ZM700.01 204.6L698.41 203.05L696.51 203.05L696.51 206.15L698.41 206.15ZM692.31 212.6L694.01 211.05L695.91 211.05L695.91 214.15L694.01 214.15ZM700.01 212.6L698.41 211.05L696.51 211.05L696.51 214.15L698.41 214.15ZM692.31 220.6L694.01 219.05L695.91 219.05L695.91 222.15L694.01 222.15ZM700.01 220.6L698.41 219.05L696.51 219.05L696.51 222.15L698.41 222.15ZM692.31 227.6L694.01 226.05L695.91 226.05L695.91 229.15L694.01 229.15ZM700.01 227.6L698.41 226.05L696.51 226.05L696.51 229.15L698.41 229.15ZM692.31 235.6L694.01 234.05L695.91 234.05L695.91 237.15L694.01 237.15ZM700.01 235.6L698.41 234.05L696.51 234.05L696.51 237.15L698.41 237.15ZM692.31 243.6L694.01 242.05L695.91 242.05L695.91 245.15L694.01 245.15ZM700.01 243.6L698.41 242.05L696.51 242.05L696.51 245.15L698.41 245.15ZM692.31 250.6L694.01 249.05L695.91 249.05L695.91 252.15L694.01 252.15ZM700.01 250.6L698.41 249.05L696.51 249.05L696.51 252.15L698.41 252.15ZM692.31 258.6L694.01 257.05L695.91 257.05L695.91 260.15L694.01 260.15ZM700.01 258.6L698.41 257.05L696.51 257.05L696.51 260.15L698.41 260.15ZM692.31 266.6L694.01 265.05L695.91 265.05L695.91 268.15L694.01 268.15ZM700.01 266.6L698.41 265.05L696.51 265.05L696.51 268.15L698.41 268.15ZM692.31 274.6L694.01 273.05L695.91 273.05L695.91 276.15L694.01 276.15ZM700.01 274.6L698.41 273.05L696.51 273.05L696.51 276.15L698.41 276.15ZM692.31 281.6L694.01 280.05L695.91 280.05L695.91 283.15L694.01 283.15ZM700.01 281.6L698.41 280.05L696.51 280.05L696.51 283.15L698.41 283.15ZM692.31 289.6L694.01 288.05L695.91 288.05L695.91 291.15L694.01 291.15ZM700.01 289.6L698.41 288.05L696.51 288.05L696.51 291.15L698.41 291.15ZM692.31 297.6L694.01 296.05L695.91 296.05L695.91 299.15L694.01 299.15ZM700.01 297.6L698.41 296.05L696.51 296.05L696.51 299.15L698.41 299.15ZM692.31 305.6L694.01 304.05L695.91 304.05L695.91 307.15L694.01 307.15ZM700.01 305.6L698.41 304.05L696.51 304.05L696.51 307.15L698.41 307.15ZM908.87 127.6L910.57 126.05L912.47 126.05L912.47 129.15L910.57 129.15ZM916.57 127.6L914.97 126.05L913.07 126.05L913.07 129.15L914.97 129.15ZM908.87 135.6L910.57 134.05L912.47 134.05L912.47 137.15L910.57 137.15ZM916.57 135.6L914.97 134.05L913.07 134.05L913.07 137.15L914.97 137.15ZM908.87 142.6L910.57 141.05L912.47 141.05L912.47 144.15L910.57 144.15ZM916.57 142.6L914.97 141.05L913.07 141.05L913.07 144.15L914.97 144.15ZM908.87 150.6L910.57 149.05L912.47 149.05L912.47 152.15L910.57 152.15ZM916.57 150.6L914.97 149.05L913.07 149.05L913.07 152.15L914.97 152.15ZM908.87 158.6L910.57 157.05L912.47 157.05L912.47 160.15L910.57 160.15ZM916.57 158.6L914.97 157.05L913.07 157.05L913.07 160.15L914.97 160.15ZM908.87 166.6L910.57 165.05L912.47 165.05L912.47 168.15L910.57 168.15ZM916.57 166.6L914.97 165.05L913.07 165.05L913.07 168.15L914.97 168.15ZM908.87 173.6L910.57 172.05L912.47 172.05L912.47 175.15L910.57 175.15ZM916.57 173.6L914.97 172.05L913.07 172.05L913.07 175.15L914.97 175.15ZM908.87 181.6L910.57 180.05L912.47 180.05L912.47 183.15L910.57 183.15ZM916.57 181.6L914.97 180.05L913.07 180.05L913.07 183.15L914.97 183.15ZM908.87 189.6L910.57 188.05L912.47 188.05L912.47 191.15L910.57 191.15ZM916.57 189.6L914.97 188.05L913.07 188.05L913.07 191.15L914.97 191.15ZM908.87 196.6L910.57 195.05L912.47 195.05L912.47 198.15L910.57 198.15ZM916.57 196.6L914.97 195.05L913.07 195.05L913.07 198.15L914.97 198.15ZM908.87 204.6L910.57 203.05L912.47 203.05L912.47 206.15L910.57 206.15ZM916.57 204.6L914.97 203.05L913.07 203.05L913.07 206.15L914.97 206.15ZM908.87 212.6L910.57 211.05L912.47 211.05L912.47 214.15L910.57 214.15ZM916.57 212.6L914.97 211.05L913.07 211.05L913.07 214.15L914.97 214.15ZM908.87 220.6L910.57 219.05L912.47 219.05L912.47 222.15L910.57 222.15ZM916.57 220.6L914.97 219.05L913.07 219.05L913.07 222.15L914.97 222.15ZM908.87 227.6L910.57 226.05L912.47 226.05L912.47 229.15L910.57 229.15ZM916.57 227.6L914.97 226.05L913.07 226.05L913.07 229.15L914.97 229.15ZM908.87 235.6L910.57 234.05L912.47 234.05L912.47 237.15L910.57 237.15ZM916.57 235.6L914.97 234.05L913.07 234.05L913.07 237.15L914.97 237.15ZM908.87 243.6L910.57 242.05L912.47 242.05L912.47 245.15L910.57 245.15ZM916.57 243.6L914.97 242.05L913.07 242.05L913.07 245.15L914.97 245.15ZM908.87 250.6L910.57 249.05L912.47 249.05L912.47 252.15L910.57 252.15ZM916.57 250.6L914.97 249.05L913.07 249.05L913.07 252.15L914.97 252.15ZM908.87 258.6L910.57 257.05L912.47 257.05L912.47 260.15L910.57 260.15ZM916.57 258.6L914.97 257.05L913.07 257.05L913.07 260.15L914.97 260.15ZM908.87 266.6L910.57 265.05L912.47 265.05L912.47 268.15L910.57 268.15ZM916.57 266.6L914.97 265.05L913.07 265.05L913.07 268.15L914.97 268.15ZM908.87 274.6L910.57 273.05L912.47 273.05L912.47 276.15L910.57 276.15ZM916.57 274.6L914.97 273.05L913.07 273.05L913.07 276.15L914.97 276.15ZM1045.2 119.5L1041.6 118L1041.6 121ZM1043.1 127.5L1046.3 126L1046.3 129ZM1045.2 135.5L1041.6 134L1041.6 137ZM1045.2 142.5L1041.6 141L1041.6 144ZM1045.2 158.5L1041.6 157L1041.6 160ZM1045.2 166.5L1041.6 165L1041.6 168ZM1045.2 173.5L1041.6 172L1041.6 175ZM1045.2 181.5L1041.6 180L1041.6 183ZM1044.91 196.6L1043.21 195.05L1041.31 195.05L1041.31 198.15L1043.21 198.15ZM1037.21 196.6L1038.81 195.05L1040.71 195.05L1040.71 198.15L1038.81 198.15ZM1044.91 204.6L1043.21 203.05L1041.31 203.05L1041.31 206.15L1043.21 206.15ZM1037.21 204.6L1038.81 203.05L1040.71 203.05L1040.71 206.15L1038.81 206.15ZM1045.2 220.5L1041.6 219L1041.6 222ZM1045.2 227.5L1041.6 226L1041.6 229ZM1045.2 243.5L1041.6 242L1041.6 245ZM1045.2 250.5L1041.6 249L1041.6 252ZM1045.2 266.5L1041.6 265L1041.6 268ZM1045.2 274.5L1041.6 273L1041.6 276ZM1045.2 289.5L1041.6 288L1041.6 291ZM1045.2 297.5L1041.6 296L1041.6 299ZM460.77 397.6L462.47 396.05L464.37 396.05L464.37 399.15L462.47 399.15ZM468.47 397.6L466.87 396.05L464.97 396.05L464.97 399.15L466.87 399.15ZM460.77 405.6L462.47 404.05L464.37 404.05L464.37 407.15L462.47 407.15ZM468.47 405.6L466.87 404.05L464.97 404.05L464.97 407.15L466.87 407.15ZM460.77 413.6L462.47 412.05L464.37 412.05L464.37 415.15L462.47 415.15ZM468.47 413.6L466.87 412.05L464.97 412.05L464.97 415.15L466.87 415.15ZM460.77 420.6L462.47 419.05L464.37 419.05L464.37 422.15L462.47 422.15ZM468.47 420.6L466.87 419.05L464.97 419.05L464.97 422.15L466.87 422.15ZM460.77 428.6L462.47 427.05L464.37 427.05L464.37 430.15L462.47 430.15ZM468.47 428.6L466.87 427.05L464.97 427.05L464.97 430.15L466.87 430.15ZM460.77 436.6L462.47 435.05L464.37 435.05L464.37 438.15L462.47 438.15ZM468.47 436.6L466.87 435.05L464.97 435.05L464.97 438.15L466.87 438.15ZM460.77 443.6L462.47 442.05L464.37 442.05L464.37 445.15L462.47 445.15ZM468.47 443.6L466.87 442.05L464.97 442.05L464.97 445.15L466.87 445.15ZM460.77 451.6L462.47 450.05L464.37 450.05L464.37 453.15L462.47 453.15ZM468.47 451.6L466.87 450.05L464.97 450.05L464.97 453.15L466.87 453.15ZM460.77 459.6L462.47 458.05L464.37 458.05L464.37 461.15L462.47 461.15ZM468.47 459.6L466.87 458.05L464.97 458.05L464.97 461.15L466.87 461.15ZM460.77 467.6L462.47 466.05L464.37 466.05L464.37 469.15L462.47 469.15ZM468.47 467.6L466.87 466.05L464.97 466.05L464.97 469.15L466.87 469.15ZM460.77 474.6L462.47 473.05L464.37 473.05L464.37 476.15L462.47 476.15ZM468.47 474.6L466.87 473.05L464.97 473.05L464.97 476.15L466.87 476.15ZM460.77 482.6L462.47 481.05L464.37 481.05L464.37 484.15L462.47 484.15ZM468.47 482.6L466.87 481.05L464.97 481.05L464.97 484.15L466.87 484.15ZM460.77 490.6L462.47 489.05L464.37 489.05L464.37 492.15L462.47 492.15ZM468.47 490.6L466.87 489.05L464.97 489.05L464.97 492.15L466.87 492.15ZM460.77 498.6L462.47 497.05L464.37 497.05L464.37 500.15L462.47 500.15ZM468.47 498.6L466.87 497.05L464.97 497.05L464.97 500.15L466.87 500.15ZM460.77 505.6L462.47 504.05L464.37 504.05L464.37 507.15L462.47 507.15ZM468.47 505.6L466.87 504.05L464.97 504.05L464.97 507.15L466.87 507.15ZM460.77 513.6L462.47 512.05L464.37 512.05L464.37 515.15L462.47 515.15ZM468.47 513.6L466.87 512.05L464.97 512.05L464.97 515.15L466.87 515.15ZM460.77 521.6L462.47 520.05L464.37 520.05L464.37 523.15L462.47 523.15ZM468.47 521.6L466.87 520.05L464.97 520.05L464.97 523.15L466.87 523.15ZM460.77 528.6L462.47 527.05L464.37 527.05L464.37 530.15L462.47 530.15ZM468.47 528.6L466.87 527.05L464.97 527.05L464.97 530.15L466.87 530.15ZM460.77 536.6L462.47 535.05L464.37 535.05L464.37 538.15L462.47 538.15ZM468.47 536.6L466.87 535.05L464.97 535.05L464.97 538.15L466.87 538.15ZM460.77 544.6L462.47 543.05L464.37 543.05L464.37 546.15L462.47 546.15ZM468.47 544.6L466.87 543.05L464.97 543.05L464.97 546.15L466.87 546.15ZM460.77 552.6L462.47 551.05L464.37 551.05L464.37 554.15L462.47 554.15ZM468.47 552.6L466.87 551.05L464.97 551.05L464.97 554.15L466.87 554.15ZM460.77 559.6L462.47 558.05L464.37 558.05L464.37 561.15L462.47 561.15ZM468.47 559.6L466.87 558.05L464.97 558.05L464.97 561.15L466.87 561.15ZM460.77 567.6L462.47 566.05L464.37 566.05L464.37 569.15L462.47 569.15ZM468.47 567.6L466.87 566.05L464.97 566.05L464.97 569.15L466.87 569.15ZM460.77 575.6L462.47 574.05L464.37 574.05L464.37 577.15L462.47 577.15ZM468.47 575.6L466.87 574.05L464.97 574.05L464.97 577.15L466.87 577.15ZM460.77 582.6L462.47 581.05L464.37 581.05L464.37 584.15L462.47 584.15ZM468.47 582.6L466.87 581.05L464.97 581.05L464.97 584.15L466.87 584.15ZM460.77 590.6L462.47 589.05L464.37 589.05L464.37 592.15L462.47 592.15ZM468.47 590.6L466.87 589.05L464.97 589.05L464.97 592.15L466.87 592.15ZM460.77 598.6L462.47 597.05L464.37 597.05L464.37 600.15L462.47 600.15ZM468.47 598.6L466.87 597.05L464.97 597.05L464.97 600.15L466.87 600.15ZM460.77 606.6L462.47 605.05L464.37 605.05L464.37 608.15L462.47 608.15ZM468.47 606.6L466.87 605.05L464.97 605.05L464.97 608.15L466.87 608.15ZM460.77 613.6L462.47 612.05L464.37 612.05L464.37 615.15L462.47 615.15ZM468.47 613.6L466.87 612.05L464.97 612.05L464.97 615.15L466.87 615.15ZM460.77 621.6L462.47 620.05L464.37 620.05L464.37 623.15L462.47 623.15ZM468.47 621.6L466.87 620.05L464.97 620.05L464.97 623.15L466.87 623.15ZM460.77 629.6L462.47 628.05L464.37 628.05L464.37 631.15L462.47 631.15ZM468.47 629.6L466.87 628.05L464.97 628.05L464.97 631.15L466.87 631.15ZM460.77 637.6L462.47 636.05L464.37 636.05L464.37 639.15L462.47 639.15ZM468.47 637.6L466.87 636.05L464.97 636.05L464.97 639.15L466.87 639.15ZM460.77 644.6L462.47 643.05L464.37 643.05L464.37 646.15L462.47 646.15ZM468.47 644.6L466.87 643.05L464.97 643.05L464.97 646.15L466.87 646.15ZM460.77 652.6L462.47 651.05L464.37 651.05L464.37 654.15L462.47 654.15ZM468.47 652.6L466.87 651.05L464.97 651.05L464.97 654.15L466.87 654.15ZM460.77 660.6L462.47 659.05L464.37 659.05L464.37 662.15L462.47 662.15ZM468.47 660.6L466.87 659.05L464.97 659.05L464.97 662.15L466.87 662.15ZM460.77 667.6L462.47 666.05L464.37 666.05L464.37 669.15L462.47 669.15ZM468.47 667.6L466.87 666.05L464.97 666.05L464.97 669.15L466.87 669.15ZM460.77 675.6L462.47 674.05L464.37 674.05L464.37 677.15L462.47 677.15ZM468.47 675.6L466.87 674.05L464.97 674.05L464.97 677.15L466.87 677.15ZM460.77 683.6L462.47 682.05L464.37 682.05L464.37 685.15L462.47 685.15ZM468.47 683.6L466.87 682.05L464.97 682.05L464.97 685.15L466.87 685.15ZM460.77 691.6L462.47 690.05L464.37 690.05L464.37 693.15L462.47 693.15ZM468.47 691.6L466.87 690.05L464.97 690.05L464.97 693.15L466.87 693.15ZM460.77 698.6L462.47 697.05L464.37 697.05L464.37 700.15L462.47 700.15ZM468.47 698.6L466.87 697.05L464.97 697.05L464.97 700.15L466.87 700.15ZM460.77 706.6L462.47 705.05L464.37 705.05L464.37 708.15L462.47 708.15ZM468.47 706.6L466.87 705.05L464.97 705.05L464.97 708.15L466.87 708.15ZM460.77 714.6L462.47 713.05L464.37 713.05L464.37 716.15L462.47 716.15ZM468.47 714.6L466.87 713.05L464.97 713.05L464.97 716.15L466.87 716.15ZM460.77 721.6L462.47 720.05L464.37 720.05L464.37 723.15L462.47 723.15ZM468.47 721.6L466.87 720.05L464.97 720.05L464.97 723.15L466.87 723.15ZM460.77 729.6L462.47 728.05L464.37 728.05L464.37 731.15L462.47 731.15ZM468.47 729.6L466.87 728.05L464.97 728.05L464.97 731.15L466.87 731.15ZM460.77 737.6L462.47 736.05L464.37 736.05L464.37 739.15L462.47 739.15ZM468.47 737.6L466.87 736.05L464.97 736.05L464.97 739.15L466.87 739.15ZM460.77 745.6L462.47 744.05L464.37 744.05L464.37 747.15L462.47 747.15ZM468.47 745.6L466.87 744.05L464.97 744.05L464.97 747.15L466.87 747.15ZM460.77 752.6L462.47 751.05L464.37 751.05L464.37 754.15L462.47 754.15ZM468.47 752.6L466.87 751.05L464.97 751.05L464.97 754.15L466.87 754.15ZM460.77 760.6L462.47 759.05L464.37 759.05L464.37 762.15L462.47 762.15ZM468.47 760.6L466.87 759.05L464.97 759.05L464.97 762.15L466.87 762.15ZM460.77 768.6L462.47 767.05L464.37 767.05L464.37 770.15L462.47 770.15ZM468.47 768.6L466.87 767.05L464.97 767.05L464.97 770.15L466.87 770.15ZM460.77 775.6L462.47 774.05L464.37 774.05L464.37 777.15L462.47 777.15ZM468.47 775.6L466.87 774.05L464.97 774.05L464.97 777.15L466.87 777.15ZM944.2 498.5L940.6 497L940.6 500ZM944.2 505.5L940.6 504L940.6 507ZM944.2 513.5L940.6 512L940.6 515ZM944.2 521.5L940.6 520L940.6 523ZM944.2 536.5L940.6 535L940.6 538ZM944.2 544.5L940.6 543L940.6 546ZM944.2 552.5L940.6 551L940.6 554ZM944.2 559.5L940.6 558L940.6 561ZM1084.8 498.5L1088.4 497L1088.4 500ZM1086.9 536.5L1083.7 535L1083.7 538ZM1086.9 544.5L1083.7 543L1083.7 546ZM1086.9 552.5L1083.7 551L1083.7 554ZM1086.9 559.5L1083.7 558L1083.7 561Z" stroke="#000" stroke-width="1.15" fill="#fffcf8" stroke-linejoin="miter"/>
<g fill="#1c1c10">
<text x="155" y="206.15">VCCINT</text>
<text x="155" y="213.87">VCCINT</text>
<text x="155" y="221.59">VCCINT</text>
<text x="155" y="229.31">VCCINT</text>
<text x="155" y="237.03">VCCINT</text>
<text x="155" y="244.75">VCCINT</text>
<text x="1051" y="121.22">TDI_0</text>
<text x="1051" y="128.94">TDO_0</text>
<text x="1052.3" y="136.66">TCK_0</text>
<text x="1051" y="144.38">TMS_0</text>
<text x="1052.3" y="159.82">CCLK_0</text>
<text x="1051" y="167.55">M0_0</text>
<text x="1051" y="175.27">M1_0</text>
<text x="1051" y="182.99">M2_0</text>
<text x="1051" y="198.43">DONE_0</text>
<text x="1051" y="206.15">INIT_B_0</text>
<text x="1051" y="221.59">PROGRAM_B_0</text>
<text x="1051" y="229.31">CFGBVS_0</text>
<text x="1051" y="244.75">VP_0</text>
<text x="1051" y="252.47">VN_0</text>
<text x="1051" y="267.91">VREFP_0</text>
<text x="1051" y="275.64">VREFN_0</text>
<text x="1051" y="291.08">DXP_0</text>
<text x="1051" y="298.8">DXN_0</text>
<text x="170" y="437.77">GND</text>
<text x="170" y="445.49">GND</text>
<text x="170" y="453.21">GND</text>
<text x="170" y="460.93">GND</text>
<text x="170" y="468.65">GND</text>
<text x="170" y="476.37">GND</text>
<text x="170" y="484.09">GND</text>
<text x="170" y="491.81">GND</text>
<text x="170" y="499.54">GND</text>
<text x="170" y="507.26">GND</text>
<text x="170" y="514.98">GND</text>
<text x="170" y="522.7">GND</text>
<text x="170" y="530.42">GND</text>
<text x="170" y="538.14">GND</text>
<text x="170" y="545.86">GND</text>
<text x="170" y="553.58">GND</text>
<text x="170" y="561.3">GND</text>
<text x="170" y="569.02">GND</text>
<text x="170" y="576.74">GND</text>
<text x="170" y="584.46">GND</text>
<text x="170" y="592.18">GND</text>
<text x="170" y="599.9">GND</text>
<text x="170" y="607.63">GND</text>
<text x="170" y="615.35">GND</text>
<text x="170" y="623.07">GND</text>
<text x="170" y="630.79">GND</text>
<text x="703" y="437.77">VCCO_0</text>
<text x="703" y="445.49">VCCO_0</text>
<text x="703" y="460.93">VCCO_14</text>
<text x="703" y="468.65">VCCO_14</text>
<text x="703" y="476.37">VCCO_14</text>
<text x="703" y="484.09">VCCO_14</text>
<text x="703" y="491.81">VCCO_14</text>
<text x="703" y="499.54">VCCO_14</text>
<text x="703" y="507.26">VCCO_14</text>
<text x="703" y="514.98">VCCO_14</text>
<text x="703" y="522.7">VCCO_14</text>
<text x="703" y="538.14">VCCO_16</text>
<text x="703" y="545.86">VCCO_16</text>
<text x="703" y="553.58">VCCO_16</text>
<text x="703" y="561.3">VCCO_16</text>
<text x="951.3" y="499.54">MGTREFCLK0P_216</text>
<text x="951.3" y="507.26">MGTREFCLK0N_216</text>
<text x="951.3" y="514.98">MGTREFCLK1P_216</text>
<text x="951.3" y="522.7">MGTREFCLK1N_216</text>
<text x="950" y="538.14">MGTPRXP0_216</text>
<text x="950" y="545.86">MGTPRXN0_216</text>
<text x="950" y="553.58">MGTPRXP1_216</text>
<text x="950" y="561.3">MGTPRXN1_216</text>
<text x="688" y="700.27">MGTAVCC</text>
<text x="688" y="707.99">MGTAVCC</text>
<text x="688" y="715.72">MGTAVCC</text>
<text x="688" y="723.44">MGTAVCC</text>
<text x="688" y="731.16">MGTAVCC</text>
</g>
<g fill="#1c1c10" text-anchor="end">
<text x="237.5" y="206.15">VCCBATT_0</text>
<text x="237.5" y="221.59">VCCADC_0</text>
<text x="237.5" y="237.03">VCCAUX</text>
<text x="237.5" y="244.75">VCCAUX</text>
<text x="237.5" y="260.19">VCCBRAM</text>
<text x="237.5" y="267.91">VCCBRAM</text>
<text x="445.5" y="167.55">IO_L6P_T0_16</text>
<text x="445.5" y="175.27">IO_L6N_T0_VREF_16</text>
<text x="444.2" y="182.99">IO_L11P_T1_SRCC_16</text>
<text x="444.2" y="190.71">IO_L11N_T1_SRCC_16</text>
<text x="444.2" y="198.43">IO_L12P_T1_MRCC_16</text>
<text x="444.2" y="206.15">IO_L12N_T1_MRCC_16</text>
<text x="444.2" y="213.87">IO_L13P_T2_MRCC_16</text>
<text x="444.2" y="221.59">IO_L13N_T2_MRCC_16</text>
<text x="444.2" y="229.31">IO_L14P_T2_SRCC_16</text>
<text x="444.2" y="237.03">IO_L14N_T2_SRCC_16</text>
<text x="445.5" y="244.75">IO_L19P_T3_16</text>
<text x="445.5" y="252.47">IO_L19N_T3_VREF_16</text>
<text x="684.5" y="128.94">IO_L1P_T0_34</text>
<text x="684.5" y="136.66">IO_L1N_T0_34</text>
<text x="684.5" y="144.38">IO_L2P_T0_34</text>
<text x="684.5" y="152.1">IO_L2N_T0_34</text>
<text x="684.5" y="159.82">IO_L3P_T0_DQS_34</text>
<text x="684.5" y="167.55">IO_L3N_T0_DQS_34</text>
<text x="684.5" y="175.27">IO_L5P_T0_34</text>
<text x="684.5" y="182.99">IO_L5N_T0_34</text>
<text x="684.5" y="190.71">IO_L6P_T0_34</text>
<text x="684.5" y="198.43">IO_L6N_T0_VREF_34</text>
<text x="684.5" y="206.15">IO_L9P_T1_DQS_34</text>
<text x="684.5" y="213.87">IO_L9N_T1_DQS_34</text>
<text x="683.2" y="221.59">IO_L11P_T1_SRCC_34</text>
<text x="683.2" y="229.31">IO_L11N_T1_SRCC_34</text>
<text x="683.2" y="237.03">IO_L12P_T1_MRCC_34</text>
<text x="683.2" y="244.75">IO_L12N_T1_MRCC_34</text>
<text x="683.2" y="252.47">IO_L13P_T2_MRCC_34</text>
<text x="683.2" y="260.19">IO_L13N_T2_MRCC_34</text>
<text x="683.2" y="267.91">IO_L14P_T2_SRCC_34</text>
<text x="683.2" y="275.64">IO_L14N_T2_SRCC_34</text>
<text x="684.5" y="283.36">IO_L16P_T2_34</text>
<text x="684.5" y="291.08">IO_L16N_T2_34</text>
<text x="684.5" y="298.8">IO_L19P_T3_34</text>
<text x="684.5" y="306.52">IO_L19N_T3_VREF_34</text>
<text x="901.5" y="128.94">IO_L1P_T0_AD4P_35</text>
<text x="901.5" y="136.66">IO_L1N_T0_AD4N_35</text>
<text x="901.5" y="144.38">IO_L2P_T0_AD12P_35</text>
<text x="901.5" y="152.1">IO_L2N_T0_AD12N_35</text>
<text x="901.5" y="159.82">IO_L3P_T0_DQS_AD5P_35</text>
<text x="901.5" y="167.55">IO_L3N_T0_DQS_AD5N_35</text>
<text x="901.5" y="175.27">IO_L5P_T0_AD13P_35</text>
<text x="901.5" y="182.99">IO_L5N_T0_AD13N_35</text>
<text x="901.5" y="190.71">IO_L6N_T0_VREF_35</text>
<text x="901.5" y="198.43">IO_L7P_T1_AD6P_35</text>
<text x="901.5" y="206.15">IO_L7N_T1_AD6N_35</text>
<text x="901.5" y="213.87">IO_L8P_T1_AD14P_35</text>
<text x="901.5" y="221.59">IO_L8N_T1_AD14N_35</text>
<text x="901.5" y="229.31">IO_L9P_T1_DQS_AD7P_35</text>
<text x="901.5" y="237.03">IO_L9N_T1_DQS_AD7N_35</text>
<text x="901.5" y="244.75">IO_L10P_T1_AD15P_35</text>
<text x="901.5" y="252.47">IO_L10N_T1_AD15N_35</text>
<text x="900.2" y="260.19">IO_L12P_T1_MRCC_35</text>
<text x="900.2" y="267.91">IO_L12N_T1_MRCC_35</text>
<text x="901.5" y="275.64">IO_L19N_T3_VREF_35</text>
<text x="221.5" y="437.77">GND</text>
<text x="221.5" y="445.49">GND</text>
<text x="221.5" y="453.21">GND</text>
<text x="221.5" y="460.93">GND</text>
<text x="221.5" y="468.65">GND</text>
<text x="221.5" y="476.37">GND</text>
<text x="221.5" y="484.09">GND</text>
<text x="221.5" y="491.81">GND</text>
<text x="221.5" y="499.54">GND</text>
<text x="221.5" y="507.26">GND</text>
<text x="221.5" y="514.98">GND</text>
<text x="221.5" y="522.7">GND</text>
<text x="221.5" y="530.42">GND</text>
<text x="221.5" y="538.14">GND</text>
<text x="221.5" y="545.86">GND</text>
<text x="221.5" y="553.58">GND</text>
<text x="221.5" y="561.3">GND</text>
<text x="221.5" y="569.02">GND</text>
<text x="221.5" y="576.74">GND</text>
<text x="221.5" y="584.46">GND</text>
<text x="221.5" y="592.18">GND</text>
<text x="221.5" y="599.9">GND</text>
<text x="221.5" y="607.63">GND</text>
<text x="221.5" y="615.35">GND</text>
<text x="221.5" y="623.07">GND</text>
<text x="221.5" y="630.79">GND</text>
<text x="221.5" y="646.23">GNDADC_0</text>
<text x="453.5" y="399.17">IO_0_14</text>
<text x="453.5" y="406.89">IO_L1P_T0_D00_MOSI_14</text>
<text x="453.5" y="414.61">IO_L1N_T0_D01_DIN_14</text>
<text x="453.5" y="422.33">IO_L2P_T0_D02_14</text>
<text x="453.5" y="430.05">IO_L2N_T0_D03_14</text>
<text x="453.5" y="437.77">IO_L3P_T0_DQS_PUDC_B_14</text>
<text x="452.2" y="445.49">IO_L3N_T0_DQS_EMCCLK_14</text>
<text x="453.5" y="453.21">IO_L4P_T0_D04_14</text>
<text x="453.5" y="460.93">IO_L4N_T0_D05_14</text>
<text x="453.5" y="468.65">IO_L5P_T0_D06_14</text>
<text x="453.5" y="476.37">IO_L5N_T0_D07_14</text>
<text x="453.5" y="484.09">IO_L6P_T0_FCS_B_14</text>
<text x="453.5" y="491.81">IO_L6N_T0_D08_VREF_14</text>
<text x="453.5" y="499.54">IO_L7P_T1_D09_14</text>
<text x="453.5" y="507.26">IO_L7N_T1_D10_14</text>
<text x="453.5" y="514.98">IO_L8P_T1_D11_14</text>
<text x="453.5" y="522.7">IO_L8N_T1_D12_14</text>
<text x="453.5" y="530.42">IO_L9P_T1_DQS_14</text>
<text x="453.5" y="538.14">IO_L9N_T1_DQS_D13_14</text>
<text x="453.5" y="545.86">IO_L10P_T1_D14_14</text>
<text x="453.5" y="553.58">IO_L10N_T1_D15_14</text>
<text x="452.2" y="561.3">IO_L11P_T1_SRCC_14</text>
<text x="452.2" y="569.02">IO_L11N_T1_SRCC_14</text>
<text x="452.2" y="576.74">IO_L12P_T1_MRCC_14</text>
<text x="452.2" y="584.46">IO_L12N_T1_MRCC_14</text>
<text x="452.2" y="592.18">IO_L13P_T2_MRCC_14</text>
<text x="452.2" y="599.9">IO_L13N_T2_MRCC_14</text>
<text x="452.2" y="607.63">IO_L14P_T2_SRCC_14</text>
<text x="452.2" y="615.35">IO_L14N_T2_SRCC_14</text>
<text x="453.5" y="623.07">IO_L15P_T2_DQS_RDWR_B_14</text>
<text x="453.5" y="630.79">IO_L15N_T2_DQS_DOUT_CSO_B_14</text>
<text x="453.5" y="638.51">IO_L16P_T2_CSI_B_14</text>
<text x="453.5" y="646.23">IO_L16N_T2_A15_D31_14</text>
<text x="453.5" y="653.95">IO_L17P_T2_A14_D30_14</text>
<text x="453.5" y="661.67">IO_L17N_T2_A13_D29_14</text>
<text x="453.5" y="669.39">IO_L18P_T2_A12_D28_14</text>
<text x="453.5" y="677.11">IO_L18N_T2_A11_D27_14</text>
<text x="453.5" y="684.83">IO_L19P_T3_A10_D26_14</text>
<text x="453.5" y="692.55">IO_L19N_T3_A09_D25_VREF_14</text>
<text x="453.5" y="700.27">IO_L20P_T3_A08_D24_14</text>
<text x="453.5" y="707.99">IO_L20N_T3_A07_D23_14</text>
<text x="453.5" y="715.72">IO_L21P_T3_DQS_14</text>
<text x="453.5" y="723.44">IO_L21N_T3_DQS_A06_D22_14</text>
<text x="453.5" y="731.16">IO_L22P_T3_A05_D21_14</text>
<text x="453.5" y="738.88">IO_L22N_T3_A04_D20_14</text>
<text x="453.5" y="746.6">IO_L23P_T3_A03_D19_14</text>
<text x="453.5" y="754.32">IO_L23N_T3_A02_D18_14</text>
<text x="453.5" y="762.04">IO_L24P_T3_A01_D17_14</text>
<text x="453.5" y="769.76">IO_L24N_T3_A00_D16_14</text>
<text x="453.5" y="777.48">IO_25_14</text>
<text x="769.5" y="437.77">VCCO_34</text>
<text x="769.5" y="445.49">VCCO_34</text>
<text x="769.5" y="453.21">VCCO_34</text>
<text x="769.5" y="460.93">VCCO_34</text>
<text x="769.5" y="468.65">VCCO_34</text>
<text x="769.5" y="476.37">VCCO_34</text>
<text x="769.5" y="491.81">VCCO_35</text>
<text x="769.5" y="499.54">VCCO_35</text>
<text x="769.5" y="507.26">VCCO_35</text>
<text x="769.5" y="514.98">VCCO_35</text>
<text x="769.5" y="522.7">VCCO_35</text>
<text x="769.5" y="530.42">VCCO_35</text>
<text x="1078.5" y="499.54">MGTRREF_216</text>
<text x="1078.5" y="538.14">MGTPTXP0_216</text>
<text x="1078.5" y="545.86">MGTPTXN0_216</text>
<text x="1078.5" y="553.58">MGTPTXP1_216</text>
<text x="1078.5" y="561.3">MGTPTXN1_216</text>
<text x="769.5" y="700.27">MGTAVTT</text>
<text x="769.5" y="707.99">MGTAVTT</text>
<text x="769.5" y="715.72">MGTAVTT</text>
<text x="769.5" y="723.44">MGTAVTT</text>
</g>
<g fill="#3a3a3a" text-anchor="end">
<text x="143.5" y="202.3">G10</text>
<text x="143.5" y="210.02">H10</text>
<text x="143.5" y="217.74">J10</text>
<text x="143.5" y="225.46">L10</text>
<text x="143.5" y="233.18">M10</text>
<text x="143.5" y="240.9">N10</text>
<text x="1039.5" y="117.37">W10</text>
<text x="1039.5" y="125.09">W8</text>
<text x="1039.5" y="132.81">C8</text>
<text x="1039.5" y="140.53">W9</text>
<text x="1039.5" y="155.97">C11</text>
<text x="1039.5" y="163.7">V12</text>
<text x="1039.5" y="171.42">W11</text>
<text x="1039.5" y="179.14">U10</text>
<text x="1039.5" y="194.58">U12</text>
<text x="1039.5" y="202.3">U11</text>
<text x="1039.5" y="217.74">V10</text>
<text x="1039.5" y="225.46">V11</text>
<text x="1039.5" y="240.9">A12</text>
<text x="1039.5" y="248.62">B13</text>
<text x="1039.5" y="264.06">B12</text>
<text x="1039.5" y="271.79">A13</text>
<text x="1039.5" y="287.23">A11</text>
<text x="1039.5" y="294.95">B11</text>
<text x="158.5" y="433.92">A1</text>
<text x="158.5" y="441.64">A3</text>
<text x="158.5" y="449.36">A5</text>
<text x="158.5" y="457.08">A7</text>
<text x="158.5" y="464.8">A9</text>
<text x="158.5" y="472.52">A19</text>
<text x="158.5" y="480.24">B3</text>
<text x="158.5" y="487.97">B5</text>
<text x="158.5" y="495.69">B7</text>
<text x="158.5" y="503.41">B9</text>
<text x="158.5" y="511.13">B14</text>
<text x="158.5" y="518.85">C2</text>
<text x="158.5" y="526.57">C3</text>
<text x="158.5" y="534.29">C4</text>
<text x="158.5" y="542.01">C6</text>
<text x="158.5" y="549.73">C10</text>
<text x="158.5" y="557.45">C19</text>
<text x="158.5" y="565.17">D3</text>
<text x="158.5" y="572.89">E3</text>
<text x="158.5" y="580.61">E17</text>
<text x="158.5" y="588.33">F1</text>
<text x="158.5" y="596.05">F2</text>
<text x="158.5" y="603.78">F19</text>
<text x="158.5" y="611.5">G1</text>
<text x="158.5" y="619.22">G8</text>
<text x="158.5" y="626.94">G11</text>
<text x="691.5" y="433.92">G12</text>
<text x="691.5" y="441.64">V9</text>
<text x="691.5" y="457.08">F17</text>
<text x="691.5" y="464.8">K12</text>
<text x="691.5" y="472.52">K13</text>
<text x="691.5" y="480.24">L12</text>
<text x="691.5" y="487.97">L13</text>
<text x="691.5" y="495.69">M12</text>
<text x="691.5" y="503.41">M17</text>
<text x="691.5" y="511.13">R17</text>
<text x="691.5" y="518.85">U13</text>
<text x="691.5" y="534.29">B19</text>
<text x="691.5" y="542.01">C14</text>
<text x="691.5" y="549.73">C18</text>
<text x="691.5" y="557.45">G13</text>
<text x="938.5" y="495.69">B8</text>
<text x="938.5" y="503.41">A8</text>
<text x="938.5" y="511.13">B10</text>
<text x="938.5" y="518.85">A10</text>
<text x="938.5" y="534.29">B4</text>
<text x="938.5" y="542.01">A4</text>
<text x="938.5" y="549.73">B6</text>
<text x="938.5" y="557.45">A6</text>
<text x="676.5" y="696.42">C1</text>
<text x="676.5" y="704.14">E1</text>
<text x="676.5" y="711.87">F3</text>
<text x="676.5" y="719.59">G9</text>
<text x="676.5" y="727.31">H9</text>
</g>
<g fill="#3a3a3a">
<text x="249.5" y="202.3">C9</text>
<text x="249.5" y="217.74">C13</text>
<text x="249.5" y="233.18">J13</text>
<text x="249.5" y="240.9">H13</text>
<text x="249.5" y="256.34">M11</text>
<text x="249.5" y="264.06">N11</text>
<text x="457.5" y="163.7">A14</text>
<text x="457.5" y="171.42">A15</text>
<text x="457.5" y="179.14">C15</text>
<text x="457.5" y="186.86">B15</text>
<text x="457.5" y="194.58">A16</text>
<text x="457.5" y="202.3">A17</text>
<text x="457.5" y="210.02">C16</text>
<text x="457.5" y="217.74">B16</text>
<text x="457.5" y="225.46">C17</text>
<text x="457.5" y="233.18">B17</text>
<text x="457.5" y="240.9">B18</text>
<text x="457.5" y="248.62">A18</text>
<text x="696.5" y="125.09">R2</text>
<text x="696.5" y="132.81">T2</text>
<text x="696.5" y="140.53">R3</text>
<text x="696.5" y="148.25">T3</text>
<text x="696.5" y="155.97">T1</text>
<text x="696.5" y="163.7">U1</text>
<text x="696.5" y="171.42">V2</text>
<text x="696.5" y="179.14">W2</text>
<text x="696.5" y="186.86">V3</text>
<text x="696.5" y="194.58">W3</text>
<text x="696.5" y="202.3">U3</text>
<text x="696.5" y="210.02">U2</text>
<text x="696.5" y="217.74">U4</text>
<text x="696.5" y="225.46">V4</text>
<text x="696.5" y="233.18">W5</text>
<text x="696.5" y="240.9">W4</text>
<text x="696.5" y="248.62">W7</text>
<text x="696.5" y="256.34">W6</text>
<text x="696.5" y="264.06">U8</text>
<text x="696.5" y="271.79">V8</text>
<text x="696.5" y="279.51">U5</text>
<text x="696.5" y="287.23">V5</text>
<text x="696.5" y="294.95">U7</text>
<text x="696.5" y="302.67">V7</text>
<text x="913.5" y="125.09">G3</text>
<text x="913.5" y="132.81">G2</text>
<text x="913.5" y="140.53">H2</text>
<text x="913.5" y="148.25">J2</text>
<text x="913.5" y="155.97">H1</text>
<text x="913.5" y="163.7">J1</text>
<text x="913.5" y="171.42">K2</text>
<text x="913.5" y="179.14">L2</text>
<text x="913.5" y="186.86">L1</text>
<text x="913.5" y="194.58">J3</text>
<text x="913.5" y="202.3">K3</text>
<text x="913.5" y="210.02">L3</text>
<text x="913.5" y="217.74">M3</text>
<text x="913.5" y="225.46">M2</text>
<text x="913.5" y="233.18">M1</text>
<text x="913.5" y="240.9">N2</text>
<text x="913.5" y="248.62">N1</text>
<text x="913.5" y="256.34">N3</text>
<text x="913.5" y="264.06">P3</text>
<text x="913.5" y="271.79">P1</text>
<text x="233.5" y="433.92">H7</text>
<text x="233.5" y="441.64">H8</text>
<text x="233.5" y="449.36">H11</text>
<text x="233.5" y="457.08">H12</text>
<text x="233.5" y="464.8">H18</text>
<text x="233.5" y="472.52">J8</text>
<text x="233.5" y="480.24">J9</text>
<text x="233.5" y="487.97">J11</text>
<text x="233.5" y="495.69">J12</text>
<text x="233.5" y="503.41">K8</text>
<text x="233.5" y="511.13">L8</text>
<text x="233.5" y="518.85">L9</text>
<text x="233.5" y="526.57">L11</text>
<text x="233.5" y="534.29">L19</text>
<text x="233.5" y="542.01">M9</text>
<text x="233.5" y="549.73">M13</text>
<text x="233.5" y="557.45">N9</text>
<text x="233.5" y="565.17">N12</text>
<text x="233.5" y="572.89">N13</text>
<text x="233.5" y="580.61">P2</text>
<text x="233.5" y="588.33">T19</text>
<text x="233.5" y="596.05">U6</text>
<text x="233.5" y="603.78">U9</text>
<text x="233.5" y="611.5">V18</text>
<text x="233.5" y="619.22">W1</text>
<text x="233.5" y="626.94">W12</text>
<text x="233.5" y="642.38">C12</text>
<text x="465.5" y="395.32">D17</text>
<text x="465.5" y="403.04">D18</text>
<text x="465.5" y="410.76">D19</text>
<text x="465.5" y="418.48">G18</text>
<text x="465.5" y="426.2">F18</text>
<text x="465.5" y="433.92">E18</text>
<text x="465.5" y="441.64">E19</text>
<text x="465.5" y="449.36">H19</text>
<text x="465.5" y="457.08">G19</text>
<text x="465.5" y="464.8">H17</text>
<text x="465.5" y="472.52">G17</text>
<text x="465.5" y="480.24">K19</text>
<text x="465.5" y="487.97">J19</text>
<text x="465.5" y="495.69">J17</text>
<text x="465.5" y="503.41">J18</text>
<text x="465.5" y="511.13">L18</text>
<text x="465.5" y="518.85">K18</text>
<text x="465.5" y="526.57">N18</text>
<text x="465.5" y="534.29">N19</text>
<text x="465.5" y="542.01">P19</text>
<text x="465.5" y="549.73">R19</text>
<text x="465.5" y="557.45">M18</text>
<text x="465.5" y="565.17">M19</text>
<text x="465.5" y="572.89">L17</text>
<text x="465.5" y="580.61">K17</text>
<text x="465.5" y="588.33">N17</text>
<text x="465.5" y="596.05">P17</text>
<text x="465.5" y="603.78">P18</text>
<text x="465.5" y="611.5">R18</text>
<text x="465.5" y="619.22">U19</text>
<text x="465.5" y="626.94">V19</text>
<text x="465.5" y="634.66">W18</text>
<text x="465.5" y="642.38">W19</text>
<text x="465.5" y="650.1">T17</text>
<text x="465.5" y="657.82">T18</text>
<text x="465.5" y="665.54">U17</text>
<text x="465.5" y="673.26">U18</text>
<text x="465.5" y="680.98">V16</text>
<text x="465.5" y="688.7">V17</text>
<text x="465.5" y="696.42">W16</text>
<text x="465.5" y="704.14">W17</text>
<text x="465.5" y="711.87">V15</text>
<text x="465.5" y="719.59">W15</text>
<text x="465.5" y="727.31">W13</text>
<text x="465.5" y="735.03">W14</text>
<text x="465.5" y="742.75">U15</text>
<text x="465.5" y="750.47">U16</text>
<text x="465.5" y="758.19">V13</text>
<text x="465.5" y="765.91">V14</text>
<text x="465.5" y="773.63">U14</text>
<text x="781.5" y="433.92">M8</text>
<text x="781.5" y="441.64">N7</text>
<text x="781.5" y="449.36">N8</text>
<text x="781.5" y="457.08">R1</text>
<text x="781.5" y="464.8">V1</text>
<text x="781.5" y="472.52">V6</text>
<text x="781.5" y="487.97">H3</text>
<text x="781.5" y="495.69">J7</text>
<text x="781.5" y="503.41">K1</text>
<text x="781.5" y="511.13">K7</text>
<text x="781.5" y="518.85">L7</text>
<text x="781.5" y="526.57">M7</text>
<text x="1090.5" y="495.69">C7</text>
<text x="1090.5" y="534.29">D2</text>
<text x="1090.5" y="542.01">D1</text>
<text x="1090.5" y="549.73">B2</text>
<text x="1090.5" y="557.45">A2</text>
<text x="781.5" y="696.42">B1</text>
<text x="781.5" y="704.14">C5</text>
<text x="781.5" y="711.87">E2</text>
<text x="781.5" y="719.59">G7</text>
</g>
<g fill="#0a0a8c"><text x="150.1" y="194.58">U?I</text><text x="343.1" y="155.97">U?B</text><text x="598.1" y="117.37">U?C</text><text x="798.1" y="117.37">U?D</text><text x="1046.1" y="109.65">U?E</text><text x="165.1" y="426.2">U?J</text><text x="335.1" y="387.6">U?A</text><text x="698.1" y="426.2">U?H</text><text x="945.1" y="487.97">U?F</text><text x="683.1" y="688.86">U?G</text></g>
<g font-weight="bold" font-size="9.6" fill="#000"><text transform="translate(355.9 164.7) rotate(-90)" text-anchor="end">BANK 16</text><text transform="translate(610.9 125.7) rotate(-90)" text-anchor="end">BANK 34</text><text transform="translate(810.9 125.7) rotate(-90)" text-anchor="end">BANK 35</text><text transform="translate(347.9 395.7) rotate(-90)" text-anchor="end">BANK 14</text></g>
</svg>
</body>
</html>
